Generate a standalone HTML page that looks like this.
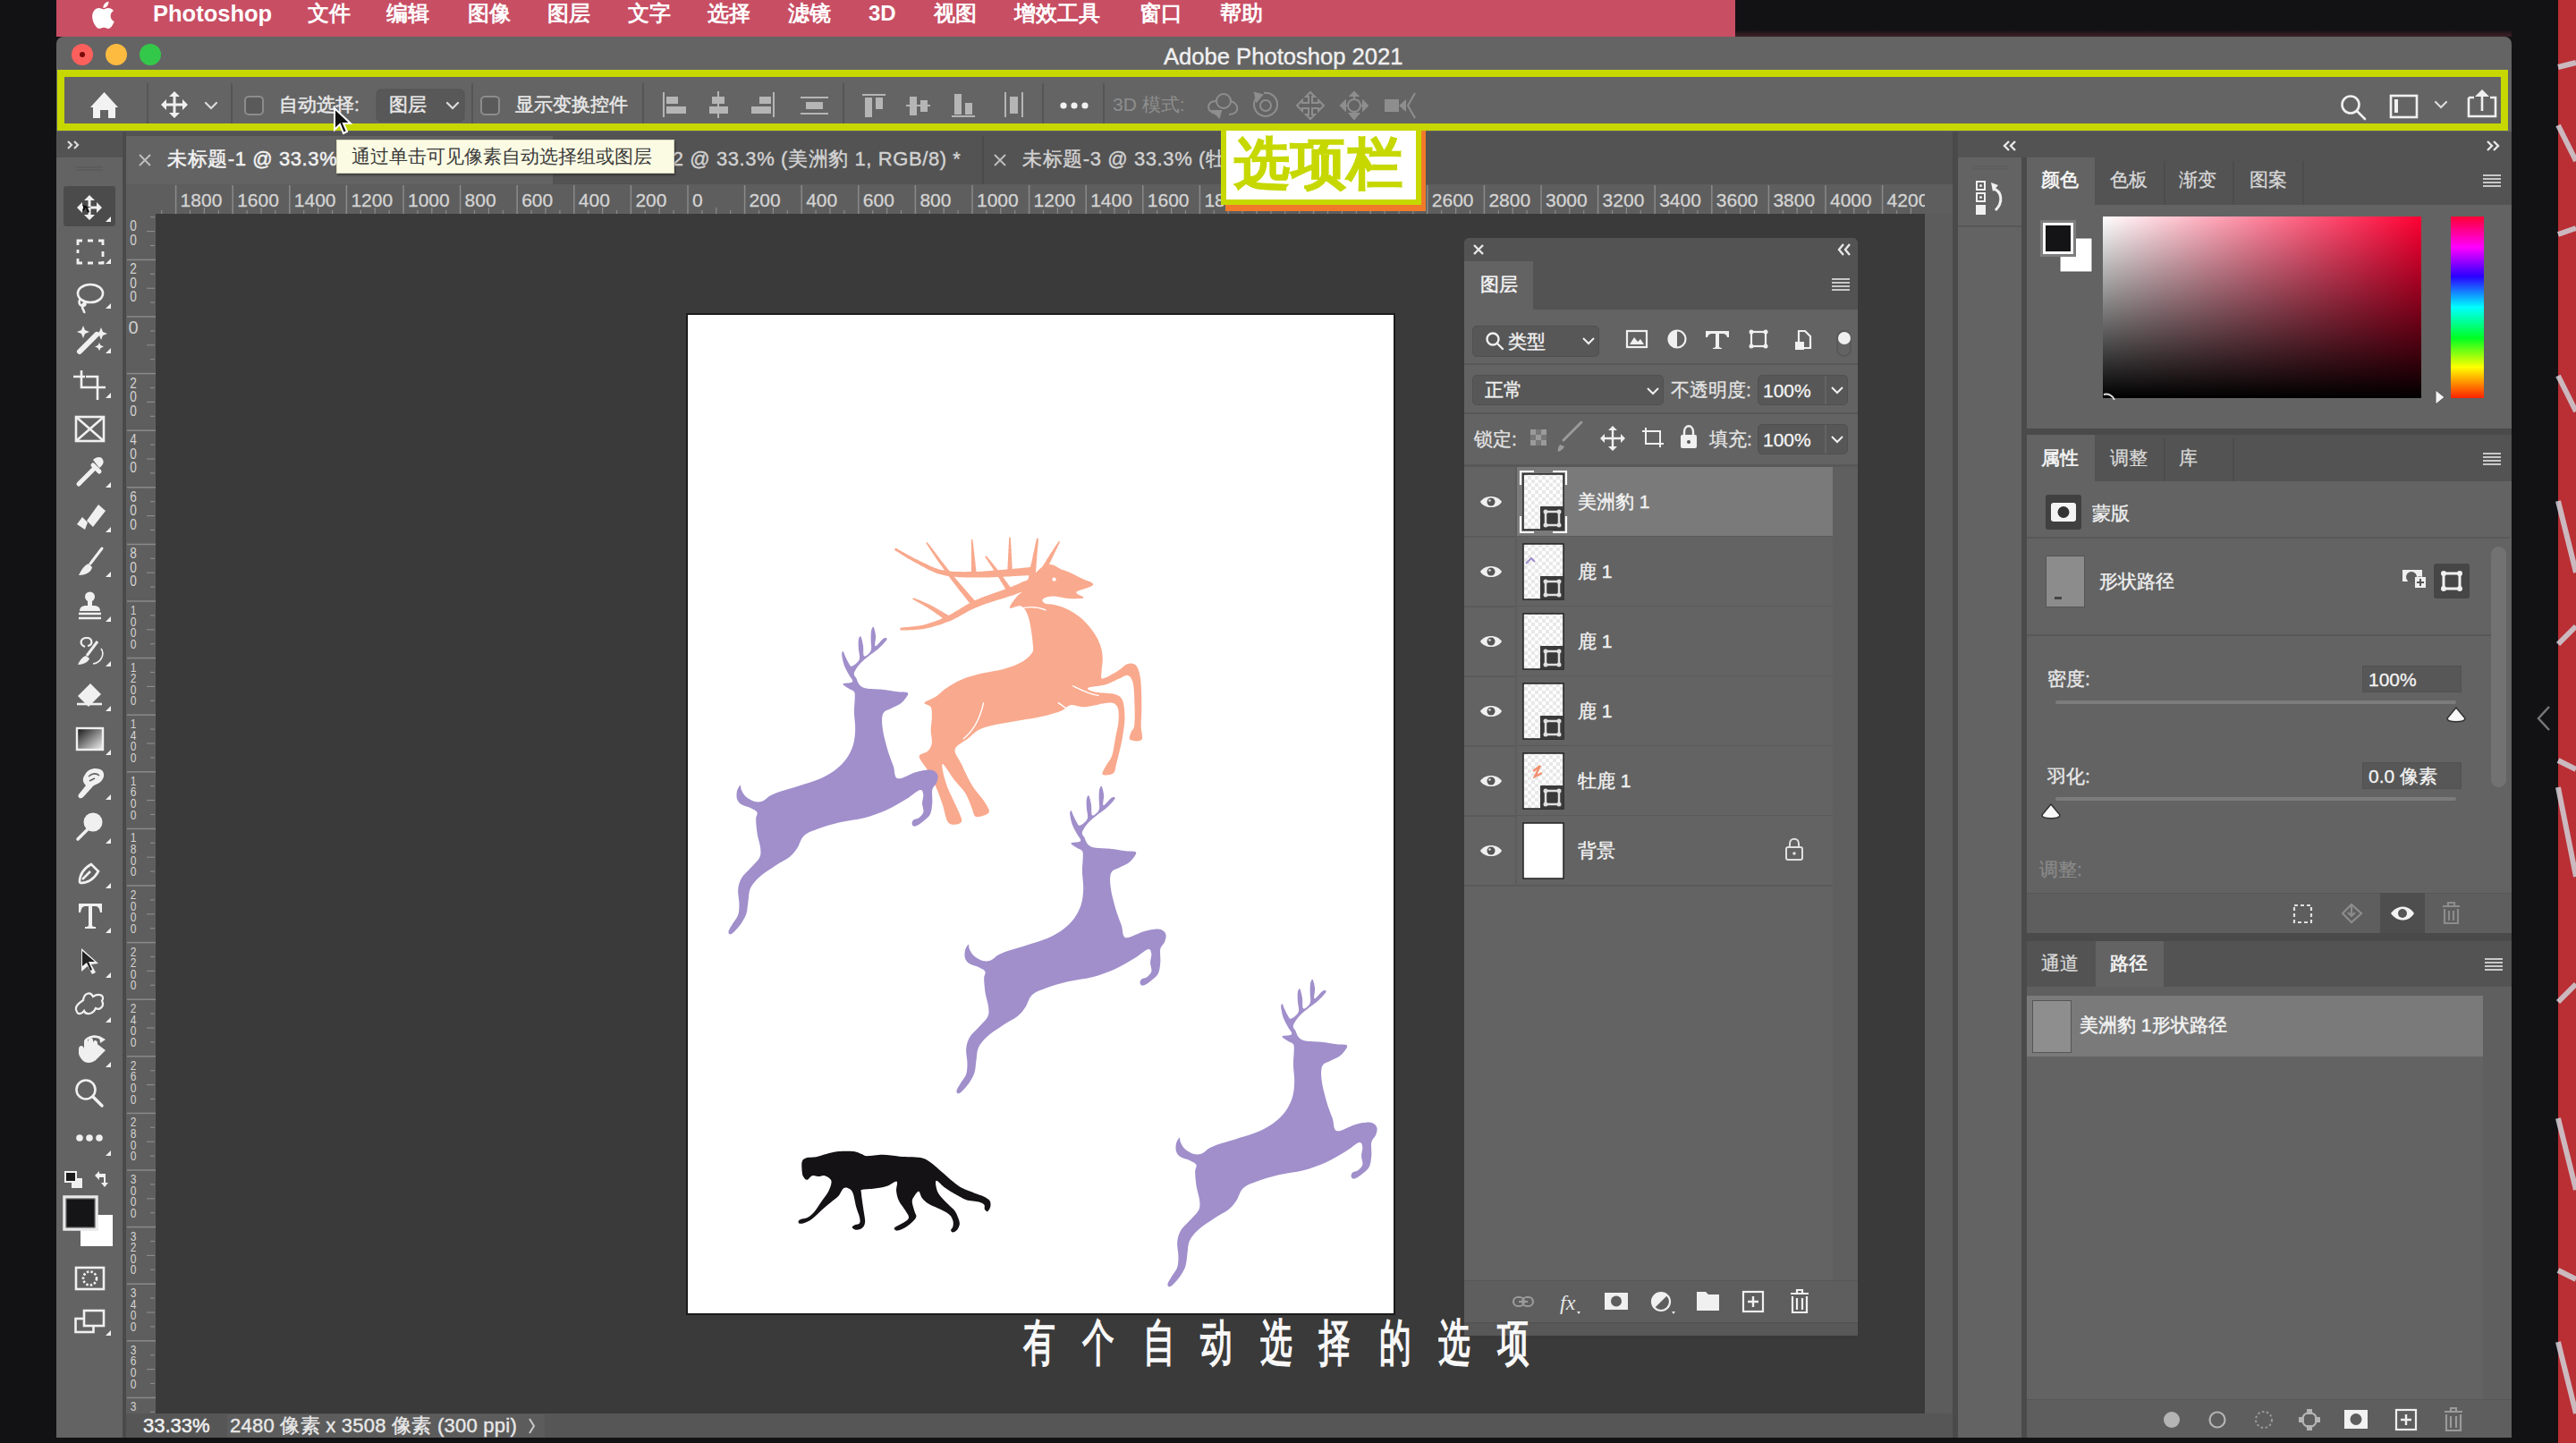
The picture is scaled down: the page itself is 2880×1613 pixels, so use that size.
<!DOCTYPE html>
<html><head><meta charset="utf-8">
<style>
*{box-sizing:border-box;margin:0;padding:0}
html,body{width:2880px;height:1613px;overflow:hidden;background:#121215;font-family:"Liberation Sans",sans-serif;color:#e6e6e6}
.a{position:absolute}
.t{position:absolute;white-space:nowrap;line-height:1}
svg{position:absolute;overflow:visible}
</style></head><body>
<!-- right red strip -->
<svg style="left:2860px;top:0" width="20" height="1613"><rect width="20" height="1613" fill="#b92f34"/><g stroke="#cfd2d8" stroke-width="6" fill="none" opacity="0.85"><path d="M0 75 L20 70"/><path d="M0 140 L20 180"/><path d="M0 262 L20 255"/><path d="M0 420 L20 460"/><path d="M0 560 L20 640"/><path d="M0 720 L20 700"/><path d="M0 850 L20 860"/><path d="M0 880 L20 980"/><path d="M0 1120 L20 1100"/><path d="M0 1250 L20 1330"/><path d="M0 1420 L20 1430"/><path d="M0 1500 L20 1580"/></g></svg>
<!-- menu bar -->
<div class="a" style="left:63px;top:0;width:1877px;height:41px;background:#c84e64"></div>
<div class="a" style="left:1940px;top:34px;width:868px;height:7px;background:linear-gradient(to bottom,#1a1216,#3d2228)"></div>
<svg style="left:96px;top:-3px" width="40" height="40" viewBox="0 0 34 34"><path fill="#fff" d="M23.5 17.8c0-3.3 2.7-4.9 2.8-5-1.5-2.2-3.9-2.5-4.7-2.6-2-.2-3.9 1.2-4.9 1.2s-2.6-1.2-4.2-1.1c-2.2 0-4.2 1.3-5.3 3.2-2.3 3.9-.6 9.8 1.6 13 1.1 1.6 2.4 3.3 4.1 3.3 1.6-.1 2.3-1.1 4.2-1.1s2.5 1.1 4.2 1c1.7 0 2.8-1.6 3.9-3.2 1.2-1.8 1.7-3.5 1.8-3.6-.1 0-3.4-1.300-3.5-5.1zM20.3 8.2c.9-1.100 1.500-2.600 1.300-4.100-1.300.1-2.900.9-3.800 2-.8.9-1.500 2.500-1.300 4 1.500.1 2.900-.8 3.800-1.900z"/></svg>
<div class="t" style="left:171px;top:3px;font-size:25.5px;font-weight:bold;color:#fff">Photoshop</div>
<div class="t" style="left:344px;top:3px;font-size:24px;color:#fff;font-weight:bold">文件</div>
<div class="t" style="left:432px;top:3px;font-size:24px;color:#fff;font-weight:bold">编辑</div>
<div class="t" style="left:523px;top:3px;font-size:24px;color:#fff;font-weight:bold">图像</div>
<div class="t" style="left:612px;top:3px;font-size:24px;color:#fff;font-weight:bold">图层</div>
<div class="t" style="left:702px;top:3px;font-size:24px;color:#fff;font-weight:bold">文字</div>
<div class="t" style="left:791px;top:3px;font-size:24px;color:#fff;font-weight:bold">选择</div>
<div class="t" style="left:881px;top:3px;font-size:24px;color:#fff;font-weight:bold">滤镜</div>
<div class="t" style="left:971px;top:3px;font-size:24px;color:#fff;font-weight:bold">3D</div>
<div class="t" style="left:1044px;top:3px;font-size:24px;color:#fff;font-weight:bold">视图</div>
<div class="t" style="left:1134px;top:3px;font-size:24px;color:#fff;font-weight:bold">增效工具</div>
<div class="t" style="left:1274px;top:3px;font-size:24px;color:#fff;font-weight:bold">窗口</div>
<div class="t" style="left:1364px;top:3px;font-size:24px;color:#fff;font-weight:bold">帮助</div>

<!-- window -->
<div class="a" style="left:63px;top:41px;width:2745px;height:1566px;background:#646464;border-radius:8px 8px 0 0"></div>
<!-- title -->
<div class="t" style="left:1301px;top:51px;font-size:25.6px;color:#f0f0f0;-webkit-text-stroke:0.4px #f0f0f0">Adobe Photoshop 2021</div>
<!-- traffic lights -->
<div class="a" style="left:80px;top:49px;width:24px;height:24px;border-radius:50%;background:#fc605c"></div>
<div class="a" style="left:89px;top:58px;width:6px;height:6px;border-radius:50%;background:#7a0a0a"></div>
<div class="a" style="left:118px;top:49px;width:24px;height:24px;border-radius:50%;background:#fdbc40"></div>
<div class="a" style="left:156px;top:49px;width:24px;height:24px;border-radius:50%;background:#34c84a"></div>
<!-- options bar yellow border -->
<div class="a" style="left:64px;top:78px;width:2740px;height:68px;border:8px solid #c6d800;background:#646464"></div>

<!-- options bar content -->
<svg style="left:0;top:0" width="2880" height="160">
<g fill="#f2f2f2">
<path d="M101 120 L116.5 103 L132 120 L129 120 L129 132 L121 132 L121 123 L112 123 L112 132 L104 132 L104 120 Z"/>
</g>
<g stroke="#555" stroke-width="2">
<line x1="165" y1="93" x2="165" y2="138"/><line x1="259" y1="93" x2="259" y2="138"/><line x1="528" y1="93" x2="528" y2="138"/><line x1="719" y1="93" x2="719" y2="138"/><line x1="943" y1="93" x2="943" y2="138"/><line x1="1166" y1="93" x2="1166" y2="138"/><line x1="1234" y1="93" x2="1234" y2="138"/>
</g>
<!-- move icon -->
<g fill="#f0f0f0" stroke="#f0f0f0">
<path d="M182 117 H208 M195 104 V130" stroke-width="3"/>
<path d="M195 102 L201 108 L189 108 Z M195 132 L201 126 L189 126 Z M180 117 L186 111 L186 123 Z M210 117 L204 111 L204 123 Z" stroke="none"/>
</g>
<rect x="421" y="100" width="98" height="36" rx="5" fill="#585858" stroke="#525252" stroke-width="1"/>
<g fill="none" stroke="#dcdcdc" stroke-width="2.2" stroke-linecap="round">
<path d="M230 115 L236 121 L242 115"/>
<path d="M500 115 L506 121 L512 115"/>
<path d="M2723 114 L2729 120 L2735 114"/>
</g>
<rect x="274" y="108" width="20" height="20" rx="4" fill="#5a5a5a" stroke="#8c8c8c" stroke-width="2"/>
<rect x="538" y="108" width="20" height="20" rx="4" fill="#5a5a5a" stroke="#8c8c8c" stroke-width="2"/>
<!-- align icons -->
<g fill="#b5b5b5">
<rect x="741" y="103" width="2" height="28"/><rect x="745" y="108" width="13" height="8"/><rect x="745" y="119" width="22" height="8"/>
<rect x="802" y="102" width="2" height="30"/><rect x="796" y="108" width="14" height="8"/><rect x="793" y="119" width="21" height="8"/>
<rect x="864" y="103" width="2" height="28"/><rect x="849" y="108" width="13" height="8"/><rect x="840" y="119" width="22" height="8"/>
<rect x="895" y="108" width="31" height="2"/><rect x="901" y="114" width="19" height="8"/><rect x="895" y="126" width="31" height="2"/>
<rect x="964" y="105" width="26" height="2"/><rect x="967" y="109" width="8" height="22"/><rect x="979" y="109" width="8" height="13"/>
<rect x="1013" y="117" width="27" height="2"/><rect x="1017" y="108" width="8" height="21"/><rect x="1029" y="112" width="8" height="13"/>
<rect x="1064" y="129" width="26" height="2"/><rect x="1067" y="105" width="8" height="23"/><rect x="1079" y="115" width="8" height="13"/>
<rect x="1123" y="103" width="2" height="28"/><rect x="1142" y="103" width="2" height="28"/><rect x="1129" y="108" width="9" height="19"/>
</g>
<g fill="#f2f2f2"><circle cx="1189" cy="118" r="3.6"/><circle cx="1201" cy="118" r="3.6"/><circle cx="1213" cy="118" r="3.6"/></g>
<!-- 3D icons -->
<g fill="none" stroke="#8e8e8e" stroke-width="2">
<circle cx="1368" cy="113" r="8"/><path d="M1360 113 C1350 113 1348 122 1356 126 L1362 128 M1376 113 C1386 116 1386 128 1374 128"/><path d="M1356 124 L1363 131 L1365 124 Z" fill="#8e8e8e"/>
<circle cx="1415" cy="118" r="6"/><path d="M1404 110 A13 13 0 1 0 1413 104"/><path d="M1403 104 L1411 106 L1405 113 Z" fill="#8e8e8e"/>
<path d="M1465 103 L1470 108 L1467 108 L1467 115 L1474 115 L1474 112 L1480 118 L1474 124 L1474 121 L1467 121 L1467 128 L1470 128 L1465 133 L1460 128 L1463 128 L1463 121 L1456 121 L1456 124 L1450 118 L1456 112 L1456 115 L1463 115 L1463 108 L1460 108 Z"/>
<circle cx="1514" cy="118" r="7"/><path d="M1514 103 V110 M1514 126 V133 M1499 118 H1506 M1522 118 H1529"/>
<path d="M1514 103 L1510 107 H1518 Z M1514 133 L1509 127 H1519 Z M1499 118 L1504 113 V123 Z M1529 118 L1524 113 V123 Z" fill="#8e8e8e"/>
<path d="M1582 104 L1574 118 L1582 132"/>
</g>
<g fill="#8e8e8e"><rect x="1548" y="111" width="16" height="14"/><path d="M1564 118 L1572 111 V125 Z"/></g>
<!-- right icons -->
<g fill="none" stroke="#f0f0f0" stroke-width="2.6">
<circle cx="2628" cy="117" r="9.5"/><path d="M2635 124 L2644 133" stroke-linecap="round"/>
<rect x="2673" y="107" width="29" height="24"/>
<path d="M2760 109 V130 H2790 V109 H2784 M2766 109 H2760" />
<path d="M2775 124 V104"/>
</g>
<g fill="#f0f0f0"><path d="M2775 100 L2783 108 H2767 Z"/><rect x="2677" y="111" width="4" height="15"/></g>
</svg>
<div class="t" style="left:312px;top:106px;font-size:21px;color:#e8e8e8;-webkit-text-stroke:0.5px #e8e8e8">自动选择:</div>
<div class="t" style="left:435px;top:106px;font-size:21px;color:#e8e8e8;-webkit-text-stroke:0.5px #e8e8e8">图层</div>
<div class="t" style="left:576px;top:106px;font-size:21px;color:#e8e8e8;-webkit-text-stroke:0.5px #e8e8e8">显示变换控件</div>
<div class="t" style="left:1244px;top:106px;font-size:21px;color:#8e8e8e">3D 模式:</div>

<!-- toolbar column -->
<div class="a" style="left:63px;top:147px;width:74px;height:1460px;background:#636363"></div>
<div class="a" style="left:63px;top:147px;width:74px;height:29px;background:#535353"></div>
<div class="a" style="left:137px;top:147px;width:4px;height:1460px;background:#4a4a4a"></div>

<!-- toolbar -->
<svg style="left:0;top:0" width="200" height="1613">

<g fill="none" stroke="#dcdcdc" stroke-width="2.2"><path d="M76 158 L80 162 L76 166 M83 158 L87 162 L83 166"/></g>
<g stroke="#575757" stroke-width="1"><path d="M85 187 H115 M85 190 H115"/></g>
<rect x="71" y="208" width="58" height="45" rx="3" fill="#4b4b4b"/>
<g fill="#f0f0f0">
<!-- triangles -->
<path d="M124 242 L124 248 L118 248 Z"/><path d="M124 289 L124 295 L118 295 Z"/><path d="M124 339 L124 345 L118 345 Z"/>
<path d="M124 389 L124 395 L118 395 Z"/><path d="M124 439 L124 445 L118 445 Z"/><path d="M124 539 L124 545 L118 545 Z"/>
<path d="M124 589 L124 595 L118 595 Z"/><path d="M124 639 L124 645 L118 645 Z"/><path d="M124 689 L124 695 L118 695 Z"/>
<path d="M124 739 L124 745 L118 745 Z"/><path d="M124 789 L124 795 L118 795 Z"/><path d="M124 838 L124 844 L118 844 Z"/>
<path d="M124 888 L124 894 L118 894 Z"/><path d="M124 937 L124 943 L118 943 Z"/><path d="M124 987 L124 993 L118 993 Z"/>
<path d="M124 1037 L124 1043 L118 1043 Z"/><path d="M124 1087 L124 1093 L118 1093 Z"/><path d="M124 1137 L124 1143 L118 1143 Z"/>
<path d="M124 1187 L124 1193 L118 1193 Z"/><path d="M124 1286 L124 1292 L118 1292 Z"/><path d="M124 1487 L124 1493 L118 1493 Z"/>
</g>
<!-- move -->
<g fill="#f0f0f0" stroke="#f0f0f0">
<path d="M89 232 H111 M100 221 V243" stroke-width="3"/>
<path d="M100 218 L106 224 L94 224 Z M100 246 L106 240 L94 240 Z M86 232 L92 226 L92 238 Z M114 232 L108 226 L108 238 Z" stroke="none"/>
</g>
<path d="M93 229 L93 236 L96 233 L98 238 L100 237 L98 232 L102 232 Z" fill="#111"/>
<g fill="none" stroke="#f0f0f0" stroke-width="2.6">
<!-- marquee -->
<path d="M87 274 V269 H92 M98 269 H104 M110 269 H115 V274 M115 281 V287 M115 292 V294 H110 M104 294 H98 M92 294 H87 V289 M87 283 V279" stroke-width="2.8"/>
<!-- lasso -->
<ellipse cx="101" cy="328" rx="14" ry="10"/><path d="M90 334 C86 340 92 344 95 341 C97 338 92 338 92 343 C92 346 95 348 94 350"/>
<!-- wand -->
<path d="M89 393 L108 374" stroke-width="6" stroke-linecap="round"/>
<!-- crop -->
<path d="M82 421 H95 M91 414 V433 H112 M96 421 H109 V440 M106 433 H118 M109 433 V447"/>
<!-- frame -->
<rect x="85" y="466" width="31" height="27"/><path d="M85 466 L116 493 M116 466 L85 493"/>
<!-- eyedropper -->
<path d="M88 541 L104 525 M104 520 L111 527" stroke-width="5" stroke-linecap="round"/>
<!-- brush -->
<path d="M114 613 L101 630" stroke-width="3" stroke-linecap="round"/>
<!-- stamp -->
<path d="M88 686 H113 M88 691 H113"/>
<!-- history brush -->
<path d="M95 723 C88 720 90 713 97 713 C104 713 104 722 98 722" stroke-width="2.2"/><path d="M113 725 C118 732 112 741 104 742" stroke-width="1.6"/>
<!-- eraser -->
<path d="M86 787 H114"/>
<!-- dodge -->
<path d="M87 938 L98 927" stroke-width="3.5" stroke-linecap="round"/>
<!-- pen -->
<path d="M89 986 C89 976 95 970 102 966 L110 974 C106 981 100 987 90 987 Z M92 983 L101 974"/>
<!-- path select -->
<!-- shape -->
<path d="M86 1131 C82 1125 90 1120 93 1118 C94 1110 101 1108 104 1114 C110 1110 118 1112 114 1119 C117 1124 112 1130 107 1127 C104 1134 96 1135 94 1130 C91 1134 87 1134 86 1131 Z" stroke-width="2.2"/>
<!-- hand rotate -->
<path d="M95 1164 C99 1158 108 1157 113 1161"/>
<!-- zoom -->
<circle cx="96" cy="1218" r="10.5"/><path d="M104 1226 L114 1236" stroke-width="3.5" stroke-linecap="round"/>
<!-- quick mask -->
<rect x="85" y="1417" width="31" height="24"/><circle cx="100.5" cy="1429" r="7.5" stroke-dasharray="2.5 2"/>
<!-- screen mode -->
<rect x="84.5" y="1474" width="20" height="15"/><rect x="94" y="1465" width="22" height="17" fill="#636363"/>
</g>
<g fill="#f0f0f0">
<!-- wand stars -->
<path d="M93 364 L95 369 L100 371 L95 373 L93 378 L91 373 L86 371 L91 369 Z M113 366 L115 371 L120 373 L115 375 L113 380 L111 375 L106 373 L111 371 Z M111 383 L112.5 386 L116 387.5 L112.5 389 L111 392 L109.5 389 L106 387.5 L109.5 386 Z"/>
<!-- eyedropper top -->
<path d="M104 514 C108 510 114 510 115 514 C117 517 114 521 111 523 Z"/>
<!-- healing -->
<path d="M97 582 L110 564 L118 571 L104 589 Z"/><path d="M92 578 L98 584 L95 592 L86 586 Z"/>
<!-- brush tip -->
<path d="M99 630 C94 632 91 637 88 643 C95 643 102 640 103 634 Z"/>
<!-- stamp -->
<circle cx="100.5" cy="667" r="5.5"/><rect x="98" y="670" width="5" height="8"/><path d="M89 683 C89 679 92 677 96 677 H105 C109 677 112 679 112 683 Z"/>
<!-- history brush tip -->
<path d="M109 717 L97 733" stroke="#f0f0f0" stroke-width="3"/><path d="M96 733 C91 735 89 739 87 743 C93 743 99 740 100 736 Z"/>
<!-- eraser -->
<path d="M87 778 L101 764 L113 776 L99 790 Z" opacity="1"/>
<!-- smudge -->
<path d="M95 866 C98 859 108 857 114 861 C118 865 116 872 111 875 C108 877 105 877 103 880 L93 891 C90 894 86 891 88 888 L96 878 C92 874 92 870 95 866 Z"/><path d="M99 868 C103 864 108 864 111 867 M100 873 L106 870" stroke="#636363" stroke-width="1.6" fill="none"/>
<!-- dodge -->
<circle cx="104" cy="919" r="10.5"/>
<!-- T -->
<path d="M88 1010 H114 V1020 H112 C111 1015 110 1013 106 1013 H103 V1034 C103 1036 105 1036 107 1036 V1038 H95 V1036 C97 1036 99 1036 99 1034 V1013 H96 C92 1013 91 1015 90 1020 H88 Z"/>
<!-- path select arrow -->
<path d="M91 1060 L110 1077 L102 1078 L107 1087 L103 1089 L98 1080 L91 1086 Z"/>
<!-- hand -->
<path d="M88 1173 C88 1168 93 1168 94 1172 V1165 C94 1161 99 1161 99 1165 V1163 C99 1159 104 1159 104 1163 V1166 C104 1162 109 1162 109 1166 V1178 C109 1184 105 1188 99 1188 C94 1188 90 1184 88 1178 Z"/>
<path d="M106 1165 L118 1174 L106 1186 Z"/><path d="M111 1158 L118 1162 L112 1166 Z"/>
<!-- dots -->
<circle cx="89" cy="1272" r="3.8"/><circle cx="100" cy="1272" r="3.8"/><circle cx="111" cy="1272" r="3.8"/>
<!-- swap -->
<path d="M106 1314 L111 1309 V1312 H118 V1322 H121 L117 1327 L113 1322 H116 V1316 H111 V1319 Z"/>
</g>
<path d="M86 1109 L86 1109" />
<path d="M92 1063 L92 1080 L97 1076 L101 1085 L103 1084 L99 1075 L106 1075 Z" fill="#222"/>
<!-- gradient -->
<defs><linearGradient id="tg" x1="0" y1="0" x2="1" y2="1"><stop offset="0" stop-color="#111"/><stop offset="1" stop-color="#f4f4f4"/></linearGradient></defs>
<rect x="86" y="814" width="29" height="24" fill="url(#tg)" stroke="#f0f0f0" stroke-width="2.4"/>
<!-- small fg/bg -->
<rect x="80" y="1317" width="12" height="11" fill="#f0f0f0"/><rect x="73" y="1310" width="12" height="11" fill="#1a1a1a" stroke="#f0f0f0" stroke-width="2"/>
<!-- fg/bg -->
<rect x="90" y="1358" width="36" height="35" fill="#fff"/>
<rect x="72" y="1338" width="36" height="36" fill="#151517" stroke="#e8e8e8" stroke-width="3.5"/>
<rect x="74" y="1340" width="32" height="32" fill="none" stroke="#777" stroke-width="1"/>
</svg>

<!-- document area -->
<div class="a" style="left:141px;top:147px;width:2042px;height:59px;background:#535353"></div>
<div class="a" style="left:141px;top:152px;width:477px;height:54px;background:#636363"></div>
<!-- rulers -->
<div class="a" style="left:141px;top:206px;width:2042px;height:33px;background:#5e5e5e"></div>
<div class="a" style="left:141px;top:206px;width:33px;height:1374px;background:#5e5e5e"></div>
<!-- canvas -->
<div class="a" style="left:174px;top:239px;width:1978px;height:1341px;background:#3a3a3a"></div>
<div class="a" style="left:2152px;top:239px;width:31px;height:1341px;background:#5c5c5c"></div>
<!-- status bar -->
<div class="a" style="left:141px;top:1580px;width:2042px;height:27px;background:#565656"></div>
<div class="a" style="left:2183px;top:147px;width:6px;height:1460px;background:#4a4a4a"></div>

<!-- tabs -->
<div class="a" style="left:1098px;top:152px;width:2px;height:54px;background:#4a4a4a"></div>
<svg style="left:0;top:0" width="1200" height="220"><g stroke="#bdbdbd" stroke-width="2"><path d="M156 173 L168 185 M168 173 L156 185"/><path d="M1112 173 L1124 185 M1124 173 L1112 185"/></g></svg>
<div class="t" style="left:187px;top:167px;font-size:22px;color:#f2f2f2;-webkit-text-stroke:0.5px #f2f2f2;letter-spacing:0.6px">未标题-1 @ 33.3% (美洲豹 1, RGB/8) *</div>
<div class="t" style="left:676px;top:167px;font-size:22px;color:#d2d2d2;-webkit-text-stroke:0.4px #d2d2d2;letter-spacing:0.6px">未标题-2 @ 33.3% (美洲豹 1, RGB/8) *</div>
<div class="t" style="left:1143px;top:167px;font-size:22px;color:#d2d2d2;-webkit-text-stroke:0.4px #d2d2d2;letter-spacing:0.6px;width:225px;overflow:hidden">未标题-3 @ 33.3% (牡鹿 1, RGB/8) *</div>
<svg style="left:0;top:0" width="2880" height="1613">
<g stroke="#8a8a8a" stroke-width="1.5">
<line x1="196.6" y1="207" x2="196.6" y2="239"/>







<line x1="260.2" y1="207" x2="260.2" y2="239"/>







<line x1="323.8" y1="207" x2="323.8" y2="239"/>







<line x1="387.4" y1="207" x2="387.4" y2="239"/>







<line x1="451.0" y1="207" x2="451.0" y2="239"/>







<line x1="514.6" y1="207" x2="514.6" y2="239"/>







<line x1="578.2" y1="207" x2="578.2" y2="239"/>







<line x1="641.8" y1="207" x2="641.8" y2="239"/>







<line x1="705.4" y1="207" x2="705.4" y2="239"/>







<line x1="769.0" y1="207" x2="769.0" y2="239"/>







<line x1="832.6" y1="207" x2="832.6" y2="239"/>







<line x1="896.2" y1="207" x2="896.2" y2="239"/>







<line x1="959.8" y1="207" x2="959.8" y2="239"/>







<line x1="1023.4" y1="207" x2="1023.4" y2="239"/>







<line x1="1087.0" y1="207" x2="1087.0" y2="239"/>







<line x1="1150.6" y1="207" x2="1150.6" y2="239"/>







<line x1="1214.2" y1="207" x2="1214.2" y2="239"/>







<line x1="1277.8" y1="207" x2="1277.8" y2="239"/>







<line x1="1341.4" y1="207" x2="1341.4" y2="239"/>







<line x1="1405.0" y1="207" x2="1405.0" y2="239"/>







<line x1="1468.6" y1="207" x2="1468.6" y2="239"/>







<line x1="1532.2" y1="207" x2="1532.2" y2="239"/>







<line x1="1595.8" y1="207" x2="1595.8" y2="239"/>







<line x1="1659.4" y1="207" x2="1659.4" y2="239"/>







<line x1="1723.0" y1="207" x2="1723.0" y2="239"/>







<line x1="1786.6" y1="207" x2="1786.6" y2="239"/>







<line x1="1850.2" y1="207" x2="1850.2" y2="239"/>







<line x1="1913.8" y1="207" x2="1913.8" y2="239"/>







<line x1="1977.4" y1="207" x2="1977.4" y2="239"/>







<line x1="2041.0" y1="207" x2="2041.0" y2="239"/>







<line x1="2104.6" y1="207" x2="2104.6" y2="239"/>





</g>
<g stroke="#8a8a8a" stroke-width="1.5">






<line x1="142" y1="290.4" x2="174" y2="290.4"/>







<line x1="142" y1="354.0" x2="174" y2="354.0"/>







<line x1="142" y1="417.6" x2="174" y2="417.6"/>







<line x1="142" y1="481.2" x2="174" y2="481.2"/>







<line x1="142" y1="544.8" x2="174" y2="544.8"/>







<line x1="142" y1="608.4" x2="174" y2="608.4"/>







<line x1="142" y1="672.0" x2="174" y2="672.0"/>







<line x1="142" y1="735.6" x2="174" y2="735.6"/>







<line x1="142" y1="799.2" x2="174" y2="799.2"/>







<line x1="142" y1="862.8" x2="174" y2="862.8"/>







<line x1="142" y1="926.4" x2="174" y2="926.4"/>







<line x1="142" y1="990.0" x2="174" y2="990.0"/>







<line x1="142" y1="1053.6" x2="174" y2="1053.6"/>







<line x1="142" y1="1117.2" x2="174" y2="1117.2"/>







<line x1="142" y1="1180.8" x2="174" y2="1180.8"/>







<line x1="142" y1="1244.4" x2="174" y2="1244.4"/>







<line x1="142" y1="1308.0" x2="174" y2="1308.0"/>







<line x1="142" y1="1371.6" x2="174" y2="1371.6"/>







<line x1="142" y1="1435.2" x2="174" y2="1435.2"/>







<line x1="142" y1="1498.8" x2="174" y2="1498.8"/>







<line x1="142" y1="1562.4" x2="174" y2="1562.4"/>


</g></svg>
<div class="t" style="left:201.6px;top:213px;font-size:21px;color:#d4d4d4;-webkit-text-stroke:0.3px #d4d4d4">1800</div>
<div class="t" style="left:265.2px;top:213px;font-size:21px;color:#d4d4d4;-webkit-text-stroke:0.3px #d4d4d4">1600</div>
<div class="t" style="left:328.8px;top:213px;font-size:21px;color:#d4d4d4;-webkit-text-stroke:0.3px #d4d4d4">1400</div>
<div class="t" style="left:392.4px;top:213px;font-size:21px;color:#d4d4d4;-webkit-text-stroke:0.3px #d4d4d4">1200</div>
<div class="t" style="left:456.0px;top:213px;font-size:21px;color:#d4d4d4;-webkit-text-stroke:0.3px #d4d4d4">1000</div>
<div class="t" style="left:519.6px;top:213px;font-size:21px;color:#d4d4d4;-webkit-text-stroke:0.3px #d4d4d4">800</div>
<div class="t" style="left:583.2px;top:213px;font-size:21px;color:#d4d4d4;-webkit-text-stroke:0.3px #d4d4d4">600</div>
<div class="t" style="left:646.8px;top:213px;font-size:21px;color:#d4d4d4;-webkit-text-stroke:0.3px #d4d4d4">400</div>
<div class="t" style="left:710.4px;top:213px;font-size:21px;color:#d4d4d4;-webkit-text-stroke:0.3px #d4d4d4">200</div>
<div class="t" style="left:774.0px;top:213px;font-size:21px;color:#d4d4d4;-webkit-text-stroke:0.3px #d4d4d4">0</div>
<div class="t" style="left:837.6px;top:213px;font-size:21px;color:#d4d4d4;-webkit-text-stroke:0.3px #d4d4d4">200</div>
<div class="t" style="left:901.2px;top:213px;font-size:21px;color:#d4d4d4;-webkit-text-stroke:0.3px #d4d4d4">400</div>
<div class="t" style="left:964.8px;top:213px;font-size:21px;color:#d4d4d4;-webkit-text-stroke:0.3px #d4d4d4">600</div>
<div class="t" style="left:1028.4px;top:213px;font-size:21px;color:#d4d4d4;-webkit-text-stroke:0.3px #d4d4d4">800</div>
<div class="t" style="left:1092.0px;top:213px;font-size:21px;color:#d4d4d4;-webkit-text-stroke:0.3px #d4d4d4">1000</div>
<div class="t" style="left:1155.6px;top:213px;font-size:21px;color:#d4d4d4;-webkit-text-stroke:0.3px #d4d4d4">1200</div>
<div class="t" style="left:1219.2px;top:213px;font-size:21px;color:#d4d4d4;-webkit-text-stroke:0.3px #d4d4d4">1400</div>
<div class="t" style="left:1282.8px;top:213px;font-size:21px;color:#d4d4d4;-webkit-text-stroke:0.3px #d4d4d4">1600</div>
<div class="t" style="left:1346.4px;top:213px;font-size:21px;color:#d4d4d4;-webkit-text-stroke:0.3px #d4d4d4">1800</div>
<div class="t" style="left:1410.0px;top:213px;font-size:21px;color:#d4d4d4;-webkit-text-stroke:0.3px #d4d4d4">2000</div>
<div class="t" style="left:1473.6px;top:213px;font-size:21px;color:#d4d4d4;-webkit-text-stroke:0.3px #d4d4d4">2200</div>
<div class="t" style="left:1537.2px;top:213px;font-size:21px;color:#d4d4d4;-webkit-text-stroke:0.3px #d4d4d4">2400</div>
<div class="t" style="left:1600.8px;top:213px;font-size:21px;color:#d4d4d4;-webkit-text-stroke:0.3px #d4d4d4">2600</div>
<div class="t" style="left:1664.4px;top:213px;font-size:21px;color:#d4d4d4;-webkit-text-stroke:0.3px #d4d4d4">2800</div>
<div class="t" style="left:1728.0px;top:213px;font-size:21px;color:#d4d4d4;-webkit-text-stroke:0.3px #d4d4d4">3000</div>
<div class="t" style="left:1791.6px;top:213px;font-size:21px;color:#d4d4d4;-webkit-text-stroke:0.3px #d4d4d4">3200</div>
<div class="t" style="left:1855.2px;top:213px;font-size:21px;color:#d4d4d4;-webkit-text-stroke:0.3px #d4d4d4">3400</div>
<div class="t" style="left:1918.8px;top:213px;font-size:21px;color:#d4d4d4;-webkit-text-stroke:0.3px #d4d4d4">3600</div>
<div class="t" style="left:1982.4px;top:213px;font-size:21px;color:#d4d4d4;-webkit-text-stroke:0.3px #d4d4d4">3800</div>
<div class="t" style="left:2046.0px;top:213px;font-size:21px;color:#d4d4d4;-webkit-text-stroke:0.3px #d4d4d4">4000</div>
<div class="t" style="left:2109.6px;top:213px;font-size:21px;color:#d4d4d4;-webkit-text-stroke:0.3px #d4d4d4">4200</div>
<svg style="left:0;top:0" width="2880" height="1613"><line x1="180.7" y1="235" x2="180.7" y2="239" stroke="#8a8a8a" stroke-width="1.2"/><line x1="212.5" y1="235" x2="212.5" y2="239" stroke="#8a8a8a" stroke-width="1.2"/><line x1="228.4" y1="232" x2="228.4" y2="239" stroke="#8a8a8a" stroke-width="1.2"/><line x1="244.3" y1="235" x2="244.3" y2="239" stroke="#8a8a8a" stroke-width="1.2"/><line x1="276.1" y1="235" x2="276.1" y2="239" stroke="#8a8a8a" stroke-width="1.2"/><line x1="292.0" y1="232" x2="292.0" y2="239" stroke="#8a8a8a" stroke-width="1.2"/><line x1="307.9" y1="235" x2="307.9" y2="239" stroke="#8a8a8a" stroke-width="1.2"/><line x1="339.7" y1="235" x2="339.7" y2="239" stroke="#8a8a8a" stroke-width="1.2"/><line x1="355.6" y1="232" x2="355.6" y2="239" stroke="#8a8a8a" stroke-width="1.2"/><line x1="371.5" y1="235" x2="371.5" y2="239" stroke="#8a8a8a" stroke-width="1.2"/><line x1="403.3" y1="235" x2="403.3" y2="239" stroke="#8a8a8a" stroke-width="1.2"/><line x1="419.2" y1="232" x2="419.2" y2="239" stroke="#8a8a8a" stroke-width="1.2"/><line x1="435.1" y1="235" x2="435.1" y2="239" stroke="#8a8a8a" stroke-width="1.2"/><line x1="466.9" y1="235" x2="466.9" y2="239" stroke="#8a8a8a" stroke-width="1.2"/><line x1="482.8" y1="232" x2="482.8" y2="239" stroke="#8a8a8a" stroke-width="1.2"/><line x1="498.7" y1="235" x2="498.7" y2="239" stroke="#8a8a8a" stroke-width="1.2"/><line x1="530.5" y1="235" x2="530.5" y2="239" stroke="#8a8a8a" stroke-width="1.2"/><line x1="546.4" y1="232" x2="546.4" y2="239" stroke="#8a8a8a" stroke-width="1.2"/><line x1="562.3" y1="235" x2="562.3" y2="239" stroke="#8a8a8a" stroke-width="1.2"/><line x1="594.1" y1="235" x2="594.1" y2="239" stroke="#8a8a8a" stroke-width="1.2"/><line x1="610.0" y1="232" x2="610.0" y2="239" stroke="#8a8a8a" stroke-width="1.2"/><line x1="625.9" y1="235" x2="625.9" y2="239" stroke="#8a8a8a" stroke-width="1.2"/><line x1="657.7" y1="235" x2="657.7" y2="239" stroke="#8a8a8a" stroke-width="1.2"/><line x1="673.6" y1="232" x2="673.6" y2="239" stroke="#8a8a8a" stroke-width="1.2"/><line x1="689.5" y1="235" x2="689.5" y2="239" stroke="#8a8a8a" stroke-width="1.2"/><line x1="721.3" y1="235" x2="721.3" y2="239" stroke="#8a8a8a" stroke-width="1.2"/><line x1="737.2" y1="232" x2="737.2" y2="239" stroke="#8a8a8a" stroke-width="1.2"/><line x1="753.1" y1="235" x2="753.1" y2="239" stroke="#8a8a8a" stroke-width="1.2"/><line x1="784.9" y1="235" x2="784.9" y2="239" stroke="#8a8a8a" stroke-width="1.2"/><line x1="800.8" y1="232" x2="800.8" y2="239" stroke="#8a8a8a" stroke-width="1.2"/><line x1="816.7" y1="235" x2="816.7" y2="239" stroke="#8a8a8a" stroke-width="1.2"/><line x1="848.5" y1="235" x2="848.5" y2="239" stroke="#8a8a8a" stroke-width="1.2"/><line x1="864.4" y1="232" x2="864.4" y2="239" stroke="#8a8a8a" stroke-width="1.2"/><line x1="880.3" y1="235" x2="880.3" y2="239" stroke="#8a8a8a" stroke-width="1.2"/><line x1="912.1" y1="235" x2="912.1" y2="239" stroke="#8a8a8a" stroke-width="1.2"/><line x1="928.0" y1="232" x2="928.0" y2="239" stroke="#8a8a8a" stroke-width="1.2"/><line x1="943.9" y1="235" x2="943.9" y2="239" stroke="#8a8a8a" stroke-width="1.2"/><line x1="975.7" y1="235" x2="975.7" y2="239" stroke="#8a8a8a" stroke-width="1.2"/><line x1="991.6" y1="232" x2="991.6" y2="239" stroke="#8a8a8a" stroke-width="1.2"/><line x1="1007.5" y1="235" x2="1007.5" y2="239" stroke="#8a8a8a" stroke-width="1.2"/><line x1="1039.3" y1="235" x2="1039.3" y2="239" stroke="#8a8a8a" stroke-width="1.2"/><line x1="1055.2" y1="232" x2="1055.2" y2="239" stroke="#8a8a8a" stroke-width="1.2"/><line x1="1071.1" y1="235" x2="1071.1" y2="239" stroke="#8a8a8a" stroke-width="1.2"/><line x1="1102.9" y1="235" x2="1102.9" y2="239" stroke="#8a8a8a" stroke-width="1.2"/><line x1="1118.8" y1="232" x2="1118.8" y2="239" stroke="#8a8a8a" stroke-width="1.2"/><line x1="1134.7" y1="235" x2="1134.7" y2="239" stroke="#8a8a8a" stroke-width="1.2"/><line x1="1166.5" y1="235" x2="1166.5" y2="239" stroke="#8a8a8a" stroke-width="1.2"/><line x1="1182.4" y1="232" x2="1182.4" y2="239" stroke="#8a8a8a" stroke-width="1.2"/><line x1="1198.3" y1="235" x2="1198.3" y2="239" stroke="#8a8a8a" stroke-width="1.2"/><line x1="1230.1" y1="235" x2="1230.1" y2="239" stroke="#8a8a8a" stroke-width="1.2"/><line x1="1246.0" y1="232" x2="1246.0" y2="239" stroke="#8a8a8a" stroke-width="1.2"/><line x1="1261.9" y1="235" x2="1261.9" y2="239" stroke="#8a8a8a" stroke-width="1.2"/><line x1="1293.7" y1="235" x2="1293.7" y2="239" stroke="#8a8a8a" stroke-width="1.2"/><line x1="1309.6" y1="232" x2="1309.6" y2="239" stroke="#8a8a8a" stroke-width="1.2"/><line x1="1325.5" y1="235" x2="1325.5" y2="239" stroke="#8a8a8a" stroke-width="1.2"/><line x1="1357.3" y1="235" x2="1357.3" y2="239" stroke="#8a8a8a" stroke-width="1.2"/><line x1="1373.2" y1="232" x2="1373.2" y2="239" stroke="#8a8a8a" stroke-width="1.2"/><line x1="1389.1" y1="235" x2="1389.1" y2="239" stroke="#8a8a8a" stroke-width="1.2"/><line x1="1420.9" y1="235" x2="1420.9" y2="239" stroke="#8a8a8a" stroke-width="1.2"/><line x1="1436.8" y1="232" x2="1436.8" y2="239" stroke="#8a8a8a" stroke-width="1.2"/><line x1="1452.7" y1="235" x2="1452.7" y2="239" stroke="#8a8a8a" stroke-width="1.2"/><line x1="1484.5" y1="235" x2="1484.5" y2="239" stroke="#8a8a8a" stroke-width="1.2"/><line x1="1500.4" y1="232" x2="1500.4" y2="239" stroke="#8a8a8a" stroke-width="1.2"/><line x1="1516.3" y1="235" x2="1516.3" y2="239" stroke="#8a8a8a" stroke-width="1.2"/><line x1="1548.1" y1="235" x2="1548.1" y2="239" stroke="#8a8a8a" stroke-width="1.2"/><line x1="1564.0" y1="232" x2="1564.0" y2="239" stroke="#8a8a8a" stroke-width="1.2"/><line x1="1579.9" y1="235" x2="1579.9" y2="239" stroke="#8a8a8a" stroke-width="1.2"/><line x1="1611.7" y1="235" x2="1611.7" y2="239" stroke="#8a8a8a" stroke-width="1.2"/><line x1="1627.6" y1="232" x2="1627.6" y2="239" stroke="#8a8a8a" stroke-width="1.2"/><line x1="1643.5" y1="235" x2="1643.5" y2="239" stroke="#8a8a8a" stroke-width="1.2"/><line x1="1675.3" y1="235" x2="1675.3" y2="239" stroke="#8a8a8a" stroke-width="1.2"/><line x1="1691.2" y1="232" x2="1691.2" y2="239" stroke="#8a8a8a" stroke-width="1.2"/><line x1="1707.1" y1="235" x2="1707.1" y2="239" stroke="#8a8a8a" stroke-width="1.2"/><line x1="1738.9" y1="235" x2="1738.9" y2="239" stroke="#8a8a8a" stroke-width="1.2"/><line x1="1754.8" y1="232" x2="1754.8" y2="239" stroke="#8a8a8a" stroke-width="1.2"/><line x1="1770.7" y1="235" x2="1770.7" y2="239" stroke="#8a8a8a" stroke-width="1.2"/><line x1="1802.5" y1="235" x2="1802.5" y2="239" stroke="#8a8a8a" stroke-width="1.2"/><line x1="1818.4" y1="232" x2="1818.4" y2="239" stroke="#8a8a8a" stroke-width="1.2"/><line x1="1834.3" y1="235" x2="1834.3" y2="239" stroke="#8a8a8a" stroke-width="1.2"/><line x1="1866.1" y1="235" x2="1866.1" y2="239" stroke="#8a8a8a" stroke-width="1.2"/><line x1="1882.0" y1="232" x2="1882.0" y2="239" stroke="#8a8a8a" stroke-width="1.2"/><line x1="1897.9" y1="235" x2="1897.9" y2="239" stroke="#8a8a8a" stroke-width="1.2"/><line x1="1929.7" y1="235" x2="1929.7" y2="239" stroke="#8a8a8a" stroke-width="1.2"/><line x1="1945.6" y1="232" x2="1945.6" y2="239" stroke="#8a8a8a" stroke-width="1.2"/><line x1="1961.5" y1="235" x2="1961.5" y2="239" stroke="#8a8a8a" stroke-width="1.2"/><line x1="1993.3" y1="235" x2="1993.3" y2="239" stroke="#8a8a8a" stroke-width="1.2"/><line x1="2009.2" y1="232" x2="2009.2" y2="239" stroke="#8a8a8a" stroke-width="1.2"/><line x1="2025.1" y1="235" x2="2025.1" y2="239" stroke="#8a8a8a" stroke-width="1.2"/><line x1="2056.9" y1="235" x2="2056.9" y2="239" stroke="#8a8a8a" stroke-width="1.2"/><line x1="2072.8" y1="232" x2="2072.8" y2="239" stroke="#8a8a8a" stroke-width="1.2"/><line x1="2088.7" y1="235" x2="2088.7" y2="239" stroke="#8a8a8a" stroke-width="1.2"/><line x1="2120.5" y1="235" x2="2120.5" y2="239" stroke="#8a8a8a" stroke-width="1.2"/><line x1="2136.4" y1="232" x2="2136.4" y2="239" stroke="#8a8a8a" stroke-width="1.2"/><line x1="168" y1="242.7" x2="173" y2="242.7" stroke="#8a8a8a" stroke-width="1.2"/><line x1="164" y1="258.6" x2="173" y2="258.6" stroke="#8a8a8a" stroke-width="1.2"/><line x1="168" y1="274.5" x2="173" y2="274.5" stroke="#8a8a8a" stroke-width="1.2"/><line x1="168" y1="306.3" x2="173" y2="306.3" stroke="#8a8a8a" stroke-width="1.2"/><line x1="164" y1="322.2" x2="173" y2="322.2" stroke="#8a8a8a" stroke-width="1.2"/><line x1="168" y1="338.1" x2="173" y2="338.1" stroke="#8a8a8a" stroke-width="1.2"/><line x1="168" y1="369.9" x2="173" y2="369.9" stroke="#8a8a8a" stroke-width="1.2"/><line x1="164" y1="385.8" x2="173" y2="385.8" stroke="#8a8a8a" stroke-width="1.2"/><line x1="168" y1="401.7" x2="173" y2="401.7" stroke="#8a8a8a" stroke-width="1.2"/><line x1="168" y1="433.5" x2="173" y2="433.5" stroke="#8a8a8a" stroke-width="1.2"/><line x1="164" y1="449.4" x2="173" y2="449.4" stroke="#8a8a8a" stroke-width="1.2"/><line x1="168" y1="465.3" x2="173" y2="465.3" stroke="#8a8a8a" stroke-width="1.2"/><line x1="168" y1="497.1" x2="173" y2="497.1" stroke="#8a8a8a" stroke-width="1.2"/><line x1="164" y1="513.0" x2="173" y2="513.0" stroke="#8a8a8a" stroke-width="1.2"/><line x1="168" y1="528.9" x2="173" y2="528.9" stroke="#8a8a8a" stroke-width="1.2"/><line x1="168" y1="560.7" x2="173" y2="560.7" stroke="#8a8a8a" stroke-width="1.2"/><line x1="164" y1="576.6" x2="173" y2="576.6" stroke="#8a8a8a" stroke-width="1.2"/><line x1="168" y1="592.5" x2="173" y2="592.5" stroke="#8a8a8a" stroke-width="1.2"/><line x1="168" y1="624.3" x2="173" y2="624.3" stroke="#8a8a8a" stroke-width="1.2"/><line x1="164" y1="640.2" x2="173" y2="640.2" stroke="#8a8a8a" stroke-width="1.2"/><line x1="168" y1="656.1" x2="173" y2="656.1" stroke="#8a8a8a" stroke-width="1.2"/><line x1="168" y1="687.9" x2="173" y2="687.9" stroke="#8a8a8a" stroke-width="1.2"/><line x1="164" y1="703.8" x2="173" y2="703.8" stroke="#8a8a8a" stroke-width="1.2"/><line x1="168" y1="719.7" x2="173" y2="719.7" stroke="#8a8a8a" stroke-width="1.2"/><line x1="168" y1="751.5" x2="173" y2="751.5" stroke="#8a8a8a" stroke-width="1.2"/><line x1="164" y1="767.4" x2="173" y2="767.4" stroke="#8a8a8a" stroke-width="1.2"/><line x1="168" y1="783.3" x2="173" y2="783.3" stroke="#8a8a8a" stroke-width="1.2"/><line x1="168" y1="815.1" x2="173" y2="815.1" stroke="#8a8a8a" stroke-width="1.2"/><line x1="164" y1="831.0" x2="173" y2="831.0" stroke="#8a8a8a" stroke-width="1.2"/><line x1="168" y1="846.9" x2="173" y2="846.9" stroke="#8a8a8a" stroke-width="1.2"/><line x1="168" y1="878.7" x2="173" y2="878.7" stroke="#8a8a8a" stroke-width="1.2"/><line x1="164" y1="894.6" x2="173" y2="894.6" stroke="#8a8a8a" stroke-width="1.2"/><line x1="168" y1="910.5" x2="173" y2="910.5" stroke="#8a8a8a" stroke-width="1.2"/><line x1="168" y1="942.3" x2="173" y2="942.3" stroke="#8a8a8a" stroke-width="1.2"/><line x1="164" y1="958.2" x2="173" y2="958.2" stroke="#8a8a8a" stroke-width="1.2"/><line x1="168" y1="974.1" x2="173" y2="974.1" stroke="#8a8a8a" stroke-width="1.2"/><line x1="168" y1="1005.9" x2="173" y2="1005.9" stroke="#8a8a8a" stroke-width="1.2"/><line x1="164" y1="1021.8" x2="173" y2="1021.8" stroke="#8a8a8a" stroke-width="1.2"/><line x1="168" y1="1037.7" x2="173" y2="1037.7" stroke="#8a8a8a" stroke-width="1.2"/><line x1="168" y1="1069.5" x2="173" y2="1069.5" stroke="#8a8a8a" stroke-width="1.2"/><line x1="164" y1="1085.4" x2="173" y2="1085.4" stroke="#8a8a8a" stroke-width="1.2"/><line x1="168" y1="1101.3" x2="173" y2="1101.3" stroke="#8a8a8a" stroke-width="1.2"/><line x1="168" y1="1133.1" x2="173" y2="1133.1" stroke="#8a8a8a" stroke-width="1.2"/><line x1="164" y1="1149.0" x2="173" y2="1149.0" stroke="#8a8a8a" stroke-width="1.2"/><line x1="168" y1="1164.9" x2="173" y2="1164.9" stroke="#8a8a8a" stroke-width="1.2"/><line x1="168" y1="1196.7" x2="173" y2="1196.7" stroke="#8a8a8a" stroke-width="1.2"/><line x1="164" y1="1212.6" x2="173" y2="1212.6" stroke="#8a8a8a" stroke-width="1.2"/><line x1="168" y1="1228.5" x2="173" y2="1228.5" stroke="#8a8a8a" stroke-width="1.2"/><line x1="168" y1="1260.3" x2="173" y2="1260.3" stroke="#8a8a8a" stroke-width="1.2"/><line x1="164" y1="1276.2" x2="173" y2="1276.2" stroke="#8a8a8a" stroke-width="1.2"/><line x1="168" y1="1292.1" x2="173" y2="1292.1" stroke="#8a8a8a" stroke-width="1.2"/><line x1="168" y1="1323.9" x2="173" y2="1323.9" stroke="#8a8a8a" stroke-width="1.2"/><line x1="164" y1="1339.8" x2="173" y2="1339.8" stroke="#8a8a8a" stroke-width="1.2"/><line x1="168" y1="1355.7" x2="173" y2="1355.7" stroke="#8a8a8a" stroke-width="1.2"/><line x1="168" y1="1387.5" x2="173" y2="1387.5" stroke="#8a8a8a" stroke-width="1.2"/><line x1="164" y1="1403.4" x2="173" y2="1403.4" stroke="#8a8a8a" stroke-width="1.2"/><line x1="168" y1="1419.3" x2="173" y2="1419.3" stroke="#8a8a8a" stroke-width="1.2"/><line x1="168" y1="1451.1" x2="173" y2="1451.1" stroke="#8a8a8a" stroke-width="1.2"/><line x1="164" y1="1467.0" x2="173" y2="1467.0" stroke="#8a8a8a" stroke-width="1.2"/><line x1="168" y1="1482.9" x2="173" y2="1482.9" stroke="#8a8a8a" stroke-width="1.2"/><line x1="168" y1="1514.7" x2="173" y2="1514.7" stroke="#8a8a8a" stroke-width="1.2"/><line x1="164" y1="1530.6" x2="173" y2="1530.6" stroke="#8a8a8a" stroke-width="1.2"/><line x1="168" y1="1546.5" x2="173" y2="1546.5" stroke="#8a8a8a" stroke-width="1.2"/><line x1="168" y1="1578.3" x2="173" y2="1578.3" stroke="#8a8a8a" stroke-width="1.2"/></svg>
<div class="t" style="left:142px;top:244.3px;font-size:17px;color:#d4d4d4;width:14px;text-align:center;transform:scaleX(0.8)">0</div>
<div class="t" style="left:142px;top:259.8px;font-size:17px;color:#d4d4d4;width:14px;text-align:center;transform:scaleX(0.8)">0</div>
<div class="t" style="left:142px;top:292.4px;font-size:17px;color:#d4d4d4;width:14px;text-align:center;transform:scaleX(0.8)">2</div>
<div class="t" style="left:142px;top:307.9px;font-size:17px;color:#d4d4d4;width:14px;text-align:center;transform:scaleX(0.8)">0</div>
<div class="t" style="left:142px;top:323.4px;font-size:17px;color:#d4d4d4;width:14px;text-align:center;transform:scaleX(0.8)">0</div>
<div class="t" style="left:142px;top:356.0px;font-size:20px;color:#cfcfcf;width:14px;text-align:center;transform:scaleX(1)">0</div>
<div class="t" style="left:142px;top:419.6px;font-size:17px;color:#d4d4d4;width:14px;text-align:center;transform:scaleX(0.8)">2</div>
<div class="t" style="left:142px;top:435.1px;font-size:17px;color:#d4d4d4;width:14px;text-align:center;transform:scaleX(0.8)">0</div>
<div class="t" style="left:142px;top:450.6px;font-size:17px;color:#d4d4d4;width:14px;text-align:center;transform:scaleX(0.8)">0</div>
<div class="t" style="left:142px;top:483.2px;font-size:17px;color:#d4d4d4;width:14px;text-align:center;transform:scaleX(0.8)">4</div>
<div class="t" style="left:142px;top:498.7px;font-size:17px;color:#d4d4d4;width:14px;text-align:center;transform:scaleX(0.8)">0</div>
<div class="t" style="left:142px;top:514.2px;font-size:17px;color:#d4d4d4;width:14px;text-align:center;transform:scaleX(0.8)">0</div>
<div class="t" style="left:142px;top:546.8px;font-size:17px;color:#d4d4d4;width:14px;text-align:center;transform:scaleX(0.8)">6</div>
<div class="t" style="left:142px;top:562.3px;font-size:17px;color:#d4d4d4;width:14px;text-align:center;transform:scaleX(0.8)">0</div>
<div class="t" style="left:142px;top:577.8px;font-size:17px;color:#d4d4d4;width:14px;text-align:center;transform:scaleX(0.8)">0</div>
<div class="t" style="left:142px;top:610.4px;font-size:17px;color:#d4d4d4;width:14px;text-align:center;transform:scaleX(0.8)">8</div>
<div class="t" style="left:142px;top:625.9px;font-size:17px;color:#d4d4d4;width:14px;text-align:center;transform:scaleX(0.8)">0</div>
<div class="t" style="left:142px;top:641.4px;font-size:17px;color:#d4d4d4;width:14px;text-align:center;transform:scaleX(0.8)">0</div>
<div class="t" style="left:142px;top:674.0px;font-size:15px;color:#d4d4d4;width:14px;text-align:center;transform:scaleX(0.8)">1</div>
<div class="t" style="left:142px;top:686.6px;font-size:15px;color:#d4d4d4;width:14px;text-align:center;transform:scaleX(0.8)">0</div>
<div class="t" style="left:142px;top:699.2px;font-size:15px;color:#d4d4d4;width:14px;text-align:center;transform:scaleX(0.8)">0</div>
<div class="t" style="left:142px;top:711.8px;font-size:15px;color:#d4d4d4;width:14px;text-align:center;transform:scaleX(0.8)">0</div>
<div class="t" style="left:142px;top:737.6px;font-size:15px;color:#d4d4d4;width:14px;text-align:center;transform:scaleX(0.8)">1</div>
<div class="t" style="left:142px;top:750.2px;font-size:15px;color:#d4d4d4;width:14px;text-align:center;transform:scaleX(0.8)">2</div>
<div class="t" style="left:142px;top:762.8px;font-size:15px;color:#d4d4d4;width:14px;text-align:center;transform:scaleX(0.8)">0</div>
<div class="t" style="left:142px;top:775.4px;font-size:15px;color:#d4d4d4;width:14px;text-align:center;transform:scaleX(0.8)">0</div>
<div class="t" style="left:142px;top:801.2px;font-size:15px;color:#d4d4d4;width:14px;text-align:center;transform:scaleX(0.8)">1</div>
<div class="t" style="left:142px;top:813.8px;font-size:15px;color:#d4d4d4;width:14px;text-align:center;transform:scaleX(0.8)">4</div>
<div class="t" style="left:142px;top:826.4px;font-size:15px;color:#d4d4d4;width:14px;text-align:center;transform:scaleX(0.8)">0</div>
<div class="t" style="left:142px;top:839.0px;font-size:15px;color:#d4d4d4;width:14px;text-align:center;transform:scaleX(0.8)">0</div>
<div class="t" style="left:142px;top:864.8px;font-size:15px;color:#d4d4d4;width:14px;text-align:center;transform:scaleX(0.8)">1</div>
<div class="t" style="left:142px;top:877.4px;font-size:15px;color:#d4d4d4;width:14px;text-align:center;transform:scaleX(0.8)">6</div>
<div class="t" style="left:142px;top:890.0px;font-size:15px;color:#d4d4d4;width:14px;text-align:center;transform:scaleX(0.8)">0</div>
<div class="t" style="left:142px;top:902.6px;font-size:15px;color:#d4d4d4;width:14px;text-align:center;transform:scaleX(0.8)">0</div>
<div class="t" style="left:142px;top:928.4px;font-size:15px;color:#d4d4d4;width:14px;text-align:center;transform:scaleX(0.8)">1</div>
<div class="t" style="left:142px;top:941.0px;font-size:15px;color:#d4d4d4;width:14px;text-align:center;transform:scaleX(0.8)">8</div>
<div class="t" style="left:142px;top:953.6px;font-size:15px;color:#d4d4d4;width:14px;text-align:center;transform:scaleX(0.8)">0</div>
<div class="t" style="left:142px;top:966.2px;font-size:15px;color:#d4d4d4;width:14px;text-align:center;transform:scaleX(0.8)">0</div>
<div class="t" style="left:142px;top:992.0px;font-size:15px;color:#d4d4d4;width:14px;text-align:center;transform:scaleX(0.8)">2</div>
<div class="t" style="left:142px;top:1004.6px;font-size:15px;color:#d4d4d4;width:14px;text-align:center;transform:scaleX(0.8)">0</div>
<div class="t" style="left:142px;top:1017.2px;font-size:15px;color:#d4d4d4;width:14px;text-align:center;transform:scaleX(0.8)">0</div>
<div class="t" style="left:142px;top:1029.8px;font-size:15px;color:#d4d4d4;width:14px;text-align:center;transform:scaleX(0.8)">0</div>
<div class="t" style="left:142px;top:1055.6px;font-size:15px;color:#d4d4d4;width:14px;text-align:center;transform:scaleX(0.8)">2</div>
<div class="t" style="left:142px;top:1068.2px;font-size:15px;color:#d4d4d4;width:14px;text-align:center;transform:scaleX(0.8)">2</div>
<div class="t" style="left:142px;top:1080.8px;font-size:15px;color:#d4d4d4;width:14px;text-align:center;transform:scaleX(0.8)">0</div>
<div class="t" style="left:142px;top:1093.4px;font-size:15px;color:#d4d4d4;width:14px;text-align:center;transform:scaleX(0.8)">0</div>
<div class="t" style="left:142px;top:1119.2px;font-size:15px;color:#d4d4d4;width:14px;text-align:center;transform:scaleX(0.8)">2</div>
<div class="t" style="left:142px;top:1131.8px;font-size:15px;color:#d4d4d4;width:14px;text-align:center;transform:scaleX(0.8)">4</div>
<div class="t" style="left:142px;top:1144.4px;font-size:15px;color:#d4d4d4;width:14px;text-align:center;transform:scaleX(0.8)">0</div>
<div class="t" style="left:142px;top:1157.0px;font-size:15px;color:#d4d4d4;width:14px;text-align:center;transform:scaleX(0.8)">0</div>
<div class="t" style="left:142px;top:1182.8px;font-size:15px;color:#d4d4d4;width:14px;text-align:center;transform:scaleX(0.8)">2</div>
<div class="t" style="left:142px;top:1195.4px;font-size:15px;color:#d4d4d4;width:14px;text-align:center;transform:scaleX(0.8)">6</div>
<div class="t" style="left:142px;top:1208.0px;font-size:15px;color:#d4d4d4;width:14px;text-align:center;transform:scaleX(0.8)">0</div>
<div class="t" style="left:142px;top:1220.6px;font-size:15px;color:#d4d4d4;width:14px;text-align:center;transform:scaleX(0.8)">0</div>
<div class="t" style="left:142px;top:1246.4px;font-size:15px;color:#d4d4d4;width:14px;text-align:center;transform:scaleX(0.8)">2</div>
<div class="t" style="left:142px;top:1259.0px;font-size:15px;color:#d4d4d4;width:14px;text-align:center;transform:scaleX(0.8)">8</div>
<div class="t" style="left:142px;top:1271.6px;font-size:15px;color:#d4d4d4;width:14px;text-align:center;transform:scaleX(0.8)">0</div>
<div class="t" style="left:142px;top:1284.2px;font-size:15px;color:#d4d4d4;width:14px;text-align:center;transform:scaleX(0.8)">0</div>
<div class="t" style="left:142px;top:1310.0px;font-size:15px;color:#d4d4d4;width:14px;text-align:center;transform:scaleX(0.8)">3</div>
<div class="t" style="left:142px;top:1322.6px;font-size:15px;color:#d4d4d4;width:14px;text-align:center;transform:scaleX(0.8)">0</div>
<div class="t" style="left:142px;top:1335.2px;font-size:15px;color:#d4d4d4;width:14px;text-align:center;transform:scaleX(0.8)">0</div>
<div class="t" style="left:142px;top:1347.8px;font-size:15px;color:#d4d4d4;width:14px;text-align:center;transform:scaleX(0.8)">0</div>
<div class="t" style="left:142px;top:1373.6px;font-size:15px;color:#d4d4d4;width:14px;text-align:center;transform:scaleX(0.8)">3</div>
<div class="t" style="left:142px;top:1386.2px;font-size:15px;color:#d4d4d4;width:14px;text-align:center;transform:scaleX(0.8)">2</div>
<div class="t" style="left:142px;top:1398.8px;font-size:15px;color:#d4d4d4;width:14px;text-align:center;transform:scaleX(0.8)">0</div>
<div class="t" style="left:142px;top:1411.4px;font-size:15px;color:#d4d4d4;width:14px;text-align:center;transform:scaleX(0.8)">0</div>
<div class="t" style="left:142px;top:1437.2px;font-size:15px;color:#d4d4d4;width:14px;text-align:center;transform:scaleX(0.8)">3</div>
<div class="t" style="left:142px;top:1449.8px;font-size:15px;color:#d4d4d4;width:14px;text-align:center;transform:scaleX(0.8)">4</div>
<div class="t" style="left:142px;top:1462.4px;font-size:15px;color:#d4d4d4;width:14px;text-align:center;transform:scaleX(0.8)">0</div>
<div class="t" style="left:142px;top:1475.0px;font-size:15px;color:#d4d4d4;width:14px;text-align:center;transform:scaleX(0.8)">0</div>
<div class="t" style="left:142px;top:1500.8px;font-size:15px;color:#d4d4d4;width:14px;text-align:center;transform:scaleX(0.8)">3</div>
<div class="t" style="left:142px;top:1513.4px;font-size:15px;color:#d4d4d4;width:14px;text-align:center;transform:scaleX(0.8)">6</div>
<div class="t" style="left:142px;top:1526.0px;font-size:15px;color:#d4d4d4;width:14px;text-align:center;transform:scaleX(0.8)">0</div>
<div class="t" style="left:142px;top:1538.6px;font-size:15px;color:#d4d4d4;width:14px;text-align:center;transform:scaleX(0.8)">0</div>
<div class="t" style="left:142px;top:1564.4px;font-size:15px;color:#d4d4d4;width:14px;text-align:center;transform:scaleX(0.8)">3</div>
<div class="a" style="left:2152px;top:206px;width:31px;height:33px;background:#5e5e5e"></div>
<!-- document -->
<div class="a" style="left:767px;top:350px;width:793px;height:1120px;background:#1b1b1d"></div>
<div class="a" style="left:769px;top:352px;width:789px;height:1116px;background:#fff"></div>

<!-- animals -->
<svg style="left:0;top:0" width="2880" height="1613">
<g transform="translate(990 590) scale(0.23568)">
<path d="M680 430 C689 461 698 532 700 560 C702 588 700 587 690 600 C680 613 662 628 640 640 C618 652 590 662 560 670 C530 678 493 682 460 690 C427 698 388 708 360 720 C332 732 310 747 290 760 C270 773 258 788 240 800 C222 812 189 822 185 830 C181 838 209 838 215 850 C221 862 220 882 220 900 C220 918 215 940 215 960 C215 980 222 1003 220 1020 C218 1037 210 1049 200 1060 C190 1071 160 1070 160 1085 C160 1100 187 1126 200 1150 C213 1174 228 1203 240 1230 C252 1257 260 1282 270 1310 C280 1338 285 1386 300 1400 C315 1414 353 1407 360 1395 C367 1383 352 1359 340 1330 C328 1301 302 1255 290 1220 C278 1185 263 1123 270 1120 C277 1117 312 1177 330 1200 C348 1223 367 1238 380 1260 C393 1282 402 1312 410 1330 C418 1348 417 1367 430 1370 C443 1373 483 1362 490 1350 C497 1338 483 1322 470 1300 C457 1278 428 1250 410 1220 C392 1190 373 1148 360 1120 C347 1092 325 1070 330 1050 C335 1030 368 1017 390 1000 C412 983 425 963 460 950 C495 937 557 928 600 920 C643 912 682 908 720 900 C758 892 803 880 830 870 C857 860 860 843 880 840 C900 837 920 852 950 850 C980 848 1035 830 1060 830 C1085 830 1092 835 1100 850 C1108 865 1107 895 1105 920 C1103 945 1095 973 1090 1000 C1085 1027 1082 1058 1075 1080 C1068 1102 1052 1115 1045 1130 C1038 1145 1024 1164 1030 1170 C1036 1176 1069 1173 1080 1165 C1091 1157 1090 1138 1095 1120 C1100 1102 1105 1082 1110 1060 C1115 1038 1121 1017 1125 990 C1129 963 1135 928 1135 900 C1135 872 1132 838 1125 820 C1118 802 1111 797 1090 790 C1069 783 1022 785 1000 780 C978 775 953 766 960 760 C967 754 1015 752 1040 745 C1065 738 1092 722 1110 715 C1128 708 1139 696 1150 700 C1161 704 1170 715 1175 740 C1180 765 1181 817 1182 850 C1183 883 1183 920 1180 940 C1177 960 1168 959 1165 970 C1162 981 1152 999 1160 1005 C1168 1011 1206 1016 1215 1005 C1224 994 1212 966 1212 940 C1212 914 1215 887 1215 850 C1215 813 1214 752 1210 720 C1206 688 1200 668 1190 655 C1180 642 1165 641 1150 645 C1135 649 1120 668 1100 680 C1080 692 1042 715 1030 715 C1018 715 1025 696 1025 680 C1025 664 1031 640 1030 620 C1029 600 1027 580 1020 560 C1013 540 1005 522 990 500 C975 478 952 449 930 430 C908 411 882 396 860 385 C838 374 817 369 800 365 C783 361 769 364 760 360 C751 356 740 346 745 340 C750 334 769 326 790 325 C811 324 845 334 870 335 C895 336 934 337 940 332 C946 327 898 315 905 305 C912 295 981 281 985 270 C989 259 949 250 930 240 C911 230 887 218 870 210 C853 202 843 201 830 195 C817 189 804 177 790 175 C776 173 760 176 745 185 C730 194 714 212 700 230 C686 248 673 273 660 290 C647 307 632 315 620 330 C608 345 586 373 590 380 C594 387 630 364 645 372 C660 380 671 399 680 430Z" fill="#f9a98d"/>
<g fill="#f9a98d"><path d="M699 186 L695 186 L692 186 L688 187 L683 187 L679 188 L673 188 L668 189 L662 189 L656 190 L650 190 L644 191 L637 192 L631 192 L624 193 L617 193 L611 194 L604 195 L597 195 L590 196 L584 196 L577 197 L571 197 L565 198 L559 198 L553 199 L547 199 L541 200 L536 200 L530 201 L524 201 L518 202 L513 202 L507 203 L501 204 L495 204 L490 205 L484 205 L478 205 L472 206 L467 206 L461 207 L455 207 L449 207 L444 208 L438 208 L432 208 L426 208 L420 208 L414 208 L408 208 L402 208 L395 208 L389 208 L383 209 L376 209 L370 209 L363 209 L357 208 L351 208 L344 208 L338 208 L332 208 L325 208 L319 207 L313 207 L307 206 L301 206 L295 205 L289 204 L284 203 L278 202 L272 201 L267 200 L262 199 L257 197 L251 196 L246 194 L241 192 L236 191 L231 189 L226 187 L221 185 L216 183 L211 180 L206 178 L202 176 L197 174 L192 171 L187 169 L182 167 L178 164 L173 162 L168 160 L163 157 L158 155 L154 153 L149 150 L144 148 L139 146 L134 143 L129 140 L124 138 L119 135 L114 132 L108 129 L103 126 L98 124 L93 121 L89 118 L84 116 L79 113 L75 110 L71 108 L67 106 L63 104 L59 102 L56 100 L53 98 L50 97 L48 95 L42 105 L45 106 L47 108 L50 110 L53 112 L57 114 L60 116 L64 119 L68 121 L73 124 L77 127 L82 130 L87 133 L91 136 L96 139 L101 142 L106 145 L111 148 L117 151 L122 154 L127 157 L132 159 L137 162 L142 165 L146 167 L151 170 L156 172 L160 175 L165 177 L169 180 L174 182 L179 185 L184 188 L188 190 L193 193 L198 195 L203 198 L208 200 L213 203 L218 205 L223 207 L229 210 L234 212 L239 214 L245 216 L250 218 L256 220 L262 221 L268 223 L273 224 L279 225 L286 227 L292 228 L298 229 L304 230 L311 230 L317 231 L324 232 L330 232 L337 233 L343 233 L350 234 L356 234 L363 234 L369 234 L376 235 L382 235 L389 235 L395 235 L401 235 L408 236 L414 236 L420 236 L426 236 L432 236 L438 236 L444 236 L450 236 L456 236 L462 236 L468 236 L474 236 L480 235 L486 235 L492 235 L497 235 L503 234 L509 234 L515 234 L521 234 L526 233 L532 233 L538 233 L544 232 L549 232 L555 232 L561 232 L567 231 L573 231 L580 231 L586 231 L593 230 L599 230 L606 229 L613 229 L620 229 L627 228 L633 228 L640 228 L647 227 L653 227 L659 227 L665 226 L671 226 L676 226 L681 225 L686 225 L691 225 L695 225 L698 225 L701 224Z"/><path d="M701 233 L699 235 L696 236 L693 237 L690 239 L686 240 L683 242 L679 244 L675 246 L671 248 L666 250 L662 252 L657 254 L652 256 L647 258 L642 260 L637 263 L632 265 L627 267 L621 270 L616 272 L610 274 L604 277 L599 279 L593 281 L587 284 L581 286 L575 288 L568 291 L562 293 L555 296 L548 298 L540 301 L533 303 L526 306 L518 309 L511 311 L503 314 L495 317 L488 319 L480 322 L473 325 L465 328 L458 330 L451 333 L444 336 L437 339 L430 342 L423 345 L417 348 L411 351 L405 354 L399 357 L393 361 L387 364 L381 367 L376 370 L370 374 L365 377 L360 380 L354 384 L349 387 L344 390 L339 393 L334 396 L329 399 L324 402 L319 405 L314 408 L309 411 L305 413 L300 416 L295 418 L290 420 L285 423 L280 425 L275 427 L270 429 L265 432 L260 434 L255 436 L250 438 L245 439 L240 441 L235 443 L230 445 L226 447 L221 448 L216 450 L211 451 L206 453 L202 454 L197 456 L192 457 L187 458 L183 460 L178 461 L173 462 L169 463 L164 464 L159 465 L153 466 L148 466 L143 467 L138 468 L133 468 L127 469 L122 469 L117 470 L112 470 L107 471 L102 471 L98 471 L93 472 L89 472 L85 472 L82 473 L78 473 L75 473 L72 474 L70 474 L70 486 L73 486 L76 486 L79 486 L82 486 L86 486 L90 486 L94 486 L98 486 L103 486 L108 486 L113 485 L118 485 L123 485 L128 485 L134 485 L139 484 L145 484 L150 483 L156 483 L161 482 L166 482 L172 481 L177 480 L182 479 L187 478 L192 477 L197 476 L202 475 L207 474 L212 473 L217 472 L222 470 L227 469 L232 467 L237 466 L242 464 L247 463 L253 461 L258 459 L263 458 L268 456 L273 454 L279 452 L284 450 L289 448 L295 446 L300 444 L305 442 L311 440 L316 437 L322 435 L327 432 L332 429 L338 426 L343 424 L348 421 L353 418 L359 415 L364 412 L369 409 L375 406 L380 403 L385 400 L391 397 L396 394 L402 391 L407 388 L413 386 L419 383 L425 380 L431 378 L437 375 L443 373 L449 370 L456 368 L463 365 L470 363 L477 360 L484 358 L492 355 L499 353 L507 350 L514 348 L522 346 L530 343 L537 341 L545 339 L552 336 L560 334 L567 332 L574 330 L581 327 L588 325 L594 323 L601 321 L607 319 L613 317 L619 314 L625 312 L631 310 L636 308 L642 306 L648 304 L653 302 L659 300 L664 298 L669 296 L674 294 L679 292 L684 290 L688 288 L692 287 L697 285 L700 283 L704 282 L708 281 L711 280 L714 278 L716 277 L719 277Z"/><path d="M308 420 L306 419 L303 418 L300 416 L297 414 L294 413 L291 411 L287 408 L283 406 L279 404 L275 401 L271 399 L266 396 L262 394 L257 391 L253 388 L248 386 L244 383 L239 381 L235 378 L231 376 L226 373 L222 371 L218 369 L214 367 L211 365 L207 363 L203 362 L199 360 L195 358 L191 356 L187 354 L183 353 L179 351 L175 349 L171 347 L167 346 L163 344 L160 343 L156 341 L153 340 L149 339 L146 337 L143 336 L141 335 L138 334 L136 333 L133 332 L132 332 L128 338 L130 339 L132 341 L134 342 L137 343 L139 345 L142 346 L145 348 L148 350 L151 351 L155 353 L158 355 L162 357 L165 359 L169 361 L173 363 L176 365 L180 367 L184 370 L188 372 L191 374 L195 376 L199 378 L202 381 L206 383 L209 385 L213 387 L216 390 L220 393 L224 395 L228 398 L233 401 L237 404 L241 407 L245 410 L250 413 L254 416 L258 419 L262 422 L266 424 L269 427 L273 430 L277 432 L280 435 L283 437 L286 439 L288 441 L290 443 L292 444Z"/><path d="M436 359 L433 356 L430 352 L426 347 L421 343 L417 338 L412 332 L407 326 L401 320 L396 314 L390 307 L384 300 L378 293 L372 286 L366 279 L359 272 L353 264 L347 257 L341 250 L335 243 L329 236 L323 229 L317 222 L312 216 L307 210 L302 203 L297 197 L292 191 L287 184 L281 177 L276 170 L271 163 L265 157 L260 150 L255 143 L250 136 L245 129 L240 123 L235 116 L230 110 L226 104 L222 98 L217 93 L214 88 L210 83 L206 79 L203 75 L200 71 L198 68 L192 72 L194 75 L197 79 L199 84 L203 88 L206 93 L209 99 L213 104 L217 110 L221 117 L226 123 L230 130 L235 137 L239 144 L244 151 L249 158 L254 165 L259 172 L264 179 L269 186 L274 193 L279 200 L283 207 L288 214 L293 220 L298 227 L303 234 L308 241 L313 248 L319 255 L325 263 L331 270 L337 278 L342 285 L348 293 L354 301 L360 308 L366 315 L371 322 L377 329 L382 336 L387 342 L392 349 L397 354 L401 360 L405 365 L408 369 L411 373 L414 377Z"/><path d="M601 293 L599 291 L598 289 L596 286 L594 283 L591 280 L589 277 L586 273 L584 270 L581 266 L578 262 L575 258 L572 254 L569 250 L566 245 L563 241 L560 237 L557 232 L554 228 L551 224 L548 220 L545 216 L542 212 L539 209 L537 205 L534 202 L532 198 L529 195 L526 191 L523 188 L520 184 L518 181 L515 177 L512 174 L509 170 L506 167 L504 163 L501 160 L498 157 L496 154 L493 151 L491 148 L489 145 L486 143 L484 140 L483 138 L481 136 L479 134 L478 133 L472 137 L473 139 L474 141 L476 143 L477 146 L479 148 L481 151 L483 154 L485 157 L487 160 L489 163 L492 167 L494 170 L496 174 L499 178 L501 181 L504 185 L506 189 L509 193 L511 196 L514 200 L516 204 L519 208 L521 211 L523 215 L525 218 L528 222 L530 226 L533 230 L536 235 L538 239 L541 243 L544 248 L546 252 L549 257 L552 261 L555 266 L557 270 L560 274 L562 278 L565 282 L567 286 L569 290 L571 293 L573 297 L575 300 L577 303 L578 305 L579 307Z"/><path d="M433 223 L433 221 L432 219 L432 217 L432 214 L431 211 L431 208 L430 205 L430 202 L430 198 L429 194 L429 191 L428 187 L428 183 L427 179 L427 175 L427 171 L426 167 L426 162 L425 158 L425 155 L424 151 L424 147 L423 143 L423 140 L423 136 L422 132 L422 128 L421 124 L421 120 L420 116 L420 112 L419 108 L419 104 L419 100 L418 96 L418 92 L417 88 L417 84 L416 80 L416 77 L416 73 L415 70 L415 67 L414 64 L414 61 L414 59 L413 57 L413 55 L407 55 L407 57 L407 59 L407 62 L407 64 L407 67 L407 71 L407 74 L407 77 L407 81 L407 85 L407 89 L407 93 L407 97 L407 101 L407 105 L407 109 L407 113 L407 117 L407 121 L407 125 L407 129 L407 133 L407 137 L407 140 L407 144 L407 148 L407 152 L407 156 L407 160 L407 164 L407 168 L407 172 L407 176 L407 180 L407 184 L407 188 L407 192 L407 196 L407 199 L407 203 L407 206 L407 210 L407 213 L407 216 L407 218 L407 221 L407 223 L407 225Z"/><path d="M603 217 L603 215 L603 213 L602 210 L602 208 L602 205 L602 201 L602 198 L601 194 L601 191 L601 187 L601 183 L600 179 L600 175 L600 171 L600 166 L600 162 L599 158 L599 154 L599 149 L599 145 L599 141 L598 137 L598 134 L598 130 L598 126 L598 123 L597 119 L597 115 L597 111 L597 107 L597 103 L596 98 L596 94 L596 90 L596 86 L596 82 L595 78 L595 74 L595 71 L595 67 L594 64 L594 60 L594 57 L594 54 L594 52 L593 49 L593 47 L593 45 L587 45 L587 47 L587 49 L586 52 L586 54 L586 57 L586 60 L586 64 L585 67 L585 71 L585 74 L585 78 L584 82 L584 86 L584 90 L584 94 L584 98 L583 103 L583 107 L583 111 L583 115 L583 119 L582 123 L582 126 L582 130 L582 134 L582 137 L581 141 L581 145 L581 149 L581 154 L581 158 L580 162 L580 166 L580 171 L580 175 L580 179 L579 183 L579 187 L579 191 L579 194 L578 198 L578 201 L578 205 L578 208 L578 210 L577 213 L577 215 L577 217Z"/><path d="M709 278 L709 275 L709 272 L710 268 L710 265 L710 261 L710 256 L710 252 L711 247 L711 242 L711 237 L711 232 L712 226 L712 221 L713 215 L713 210 L713 204 L714 198 L714 193 L715 187 L715 182 L715 177 L716 171 L716 166 L716 162 L717 157 L717 152 L718 147 L718 142 L718 136 L719 131 L719 126 L720 120 L720 115 L721 110 L721 104 L722 99 L722 94 L723 89 L723 84 L724 79 L724 75 L724 71 L725 66 L725 63 L725 59 L725 56 L725 53 L726 51 L718 49 L718 52 L717 55 L716 58 L715 61 L714 65 L713 69 L712 73 L711 77 L710 82 L709 87 L708 92 L707 97 L706 102 L705 107 L704 112 L702 118 L701 123 L700 128 L699 133 L698 139 L697 144 L696 149 L695 154 L694 158 L693 163 L692 168 L690 173 L689 178 L688 184 L687 189 L686 195 L685 200 L684 206 L683 211 L682 217 L681 222 L680 228 L679 233 L678 238 L677 243 L676 248 L675 252 L674 256 L674 260 L673 264 L672 267 L671 270 L671 272Z"/><path d="M758 217 L758 215 L759 213 L760 211 L761 208 L762 205 L764 202 L765 199 L766 196 L768 193 L769 189 L771 186 L773 182 L774 179 L776 175 L778 171 L779 167 L781 164 L783 160 L785 156 L786 153 L788 149 L790 146 L791 142 L793 139 L794 136 L796 133 L797 129 L799 126 L801 123 L802 119 L804 116 L806 112 L807 109 L809 105 L811 102 L813 98 L814 95 L816 92 L817 88 L819 85 L820 82 L822 80 L823 77 L824 75 L825 72 L826 70 L827 68 L828 66 L822 64 L821 65 L820 67 L819 69 L817 71 L816 73 L814 75 L812 78 L810 81 L808 83 L807 86 L805 89 L802 92 L800 96 L798 99 L796 102 L794 105 L792 109 L790 112 L788 115 L785 118 L783 122 L781 125 L779 128 L777 131 L776 134 L774 137 L772 140 L769 144 L767 147 L765 150 L763 154 L761 157 L759 161 L757 165 L754 168 L752 172 L750 175 L748 178 L746 181 L744 185 L743 188 L741 190 L739 193 L738 196 L736 198 L735 200 L733 202 L732 203Z"/></g>
<circle cx="800" cy="245" r="9" fill="#fff"/>
<g fill="none" stroke="#fff" stroke-width="6" stroke-linecap="round"><path d="M890 750 C930 770 970 790 1010 795"/><path d="M820 830 C860 860 880 870 900 875"/><path d="M465 830 C450 900 420 960 370 1000"/><path d="M640 385 C680 370 720 375 760 390"/></g>
</g>
<g fill="#a08fcb">
<path transform="translate(799 691) scale(0.2495)" d="M575 295 C574 299 592 309 600 315 C608 321 620 322 625 330 C630 338 628 345 628 360 C628 375 625 397 625 420 C625 443 631 475 630 500 C629 525 627 548 620 570 C613 592 603 612 590 630 C577 648 560 665 540 680 C520 695 497 708 470 720 C443 732 408 741 380 750 C352 759 322 768 300 775 C278 782 264 788 250 795 C236 802 227 816 215 820 C203 824 192 825 180 822 C168 819 150 809 140 800 C130 791 124 779 120 770 C116 761 118 747 115 748 C112 749 102 765 100 775 C98 785 97 800 100 810 C103 820 110 828 120 835 C130 842 148 844 160 850 C172 856 186 862 190 870 C194 878 185 885 185 900 C185 915 187 938 190 960 C193 982 203 1011 205 1030 C207 1049 208 1060 200 1075 C192 1090 173 1105 160 1120 C147 1135 129 1149 120 1165 C111 1181 107 1196 105 1215 C103 1234 110 1261 110 1280 C110 1299 110 1315 105 1330 C100 1345 87 1358 80 1370 C73 1382 63 1398 62 1405 C61 1412 67 1419 75 1415 C83 1411 99 1394 110 1380 C121 1366 133 1348 140 1330 C147 1312 147 1290 150 1270 C153 1250 152 1228 160 1210 C168 1192 182 1177 200 1160 C218 1143 248 1125 270 1110 C292 1095 318 1083 335 1070 C352 1057 359 1046 370 1030 C381 1014 385 989 400 975 C415 961 433 955 460 945 C487 935 525 923 560 915 C595 907 635 904 670 895 C705 886 738 874 770 860 C802 846 835 825 860 810 C885 795 908 773 920 770 C932 767 933 780 935 790 C937 800 930 817 930 830 C930 843 938 859 935 870 C932 881 922 889 915 895 C908 901 895 900 890 905 C885 910 883 920 885 925 C887 930 892 934 900 932 C908 930 924 919 935 910 C946 901 958 893 965 880 C972 867 973 848 975 830 C977 812 972 786 975 770 C978 754 991 746 995 735 C999 724 1002 713 1000 705 C998 697 993 689 985 685 C977 681 964 679 950 680 C936 681 922 684 900 690 C878 696 837 723 820 718 C803 713 808 681 800 660 C792 639 782 615 775 590 C768 565 759 533 755 510 C751 487 749 465 750 450 C751 435 753 428 760 420 C767 412 778 411 790 405 C802 399 819 392 830 385 C841 378 849 368 855 360 C861 352 871 340 865 335 C859 330 839 332 820 330 C801 328 773 322 750 320 C727 318 697 318 680 315 C663 312 658 308 650 300 C642 292 639 279 635 270 C631 261 622 257 625 245 C628 233 644 212 655 200 C666 188 678 180 690 170 C702 160 718 150 730 140 C742 130 753 118 760 110 C767 102 773 95 772 92 C771 89 764 86 755 92 C746 98 726 127 720 125 C714 123 723 94 722 80 C721 66 715 44 712 40 C709 36 704 45 702 55 C700 65 700 85 700 100 C700 115 705 133 700 145 C695 157 676 174 670 170 C664 166 668 135 665 120 C662 105 658 86 655 82 C652 78 647 85 645 95 C643 105 644 125 645 140 C646 155 653 172 648 185 C643 198 623 212 615 215 C607 218 605 208 600 200 C595 192 589 179 585 170 C581 161 578 149 575 148 C572 147 569 155 570 165 C571 175 575 196 580 210 C585 224 594 238 600 250 C606 262 617 273 618 280 C619 287 612 288 605 290 C598 292 576 291 575 295Z"/>
<path transform="translate(1054 869) scale(0.2495)" d="M575 295 C574 299 592 309 600 315 C608 321 620 322 625 330 C630 338 628 345 628 360 C628 375 625 397 625 420 C625 443 631 475 630 500 C629 525 627 548 620 570 C613 592 603 612 590 630 C577 648 560 665 540 680 C520 695 497 708 470 720 C443 732 408 741 380 750 C352 759 322 768 300 775 C278 782 264 788 250 795 C236 802 227 816 215 820 C203 824 192 825 180 822 C168 819 150 809 140 800 C130 791 124 779 120 770 C116 761 118 747 115 748 C112 749 102 765 100 775 C98 785 97 800 100 810 C103 820 110 828 120 835 C130 842 148 844 160 850 C172 856 186 862 190 870 C194 878 185 885 185 900 C185 915 187 938 190 960 C193 982 203 1011 205 1030 C207 1049 208 1060 200 1075 C192 1090 173 1105 160 1120 C147 1135 129 1149 120 1165 C111 1181 107 1196 105 1215 C103 1234 110 1261 110 1280 C110 1299 110 1315 105 1330 C100 1345 87 1358 80 1370 C73 1382 63 1398 62 1405 C61 1412 67 1419 75 1415 C83 1411 99 1394 110 1380 C121 1366 133 1348 140 1330 C147 1312 147 1290 150 1270 C153 1250 152 1228 160 1210 C168 1192 182 1177 200 1160 C218 1143 248 1125 270 1110 C292 1095 318 1083 335 1070 C352 1057 359 1046 370 1030 C381 1014 385 989 400 975 C415 961 433 955 460 945 C487 935 525 923 560 915 C595 907 635 904 670 895 C705 886 738 874 770 860 C802 846 835 825 860 810 C885 795 908 773 920 770 C932 767 933 780 935 790 C937 800 930 817 930 830 C930 843 938 859 935 870 C932 881 922 889 915 895 C908 901 895 900 890 905 C885 910 883 920 885 925 C887 930 892 934 900 932 C908 930 924 919 935 910 C946 901 958 893 965 880 C972 867 973 848 975 830 C977 812 972 786 975 770 C978 754 991 746 995 735 C999 724 1002 713 1000 705 C998 697 993 689 985 685 C977 681 964 679 950 680 C936 681 922 684 900 690 C878 696 837 723 820 718 C803 713 808 681 800 660 C792 639 782 615 775 590 C768 565 759 533 755 510 C751 487 749 465 750 450 C751 435 753 428 760 420 C767 412 778 411 790 405 C802 399 819 392 830 385 C841 378 849 368 855 360 C861 352 871 340 865 335 C859 330 839 332 820 330 C801 328 773 322 750 320 C727 318 697 318 680 315 C663 312 658 308 650 300 C642 292 639 279 635 270 C631 261 622 257 625 245 C628 233 644 212 655 200 C666 188 678 180 690 170 C702 160 718 150 730 140 C742 130 753 118 760 110 C767 102 773 95 772 92 C771 89 764 86 755 92 C746 98 726 127 720 125 C714 123 723 94 722 80 C721 66 715 44 712 40 C709 36 704 45 702 55 C700 65 700 85 700 100 C700 115 705 133 700 145 C695 157 676 174 670 170 C664 166 668 135 665 120 C662 105 658 86 655 82 C652 78 647 85 645 95 C643 105 644 125 645 140 C646 155 653 172 648 185 C643 198 623 212 615 215 C607 218 605 208 600 200 C595 192 589 179 585 170 C581 161 578 149 575 148 C572 147 569 155 570 165 C571 175 575 196 580 210 C585 224 594 238 600 250 C606 262 617 273 618 280 C619 287 612 288 605 290 C598 292 576 291 575 295Z"/>
<path transform="translate(1290 1085) scale(0.2495)" d="M575 295 C574 299 592 309 600 315 C608 321 620 322 625 330 C630 338 628 345 628 360 C628 375 625 397 625 420 C625 443 631 475 630 500 C629 525 627 548 620 570 C613 592 603 612 590 630 C577 648 560 665 540 680 C520 695 497 708 470 720 C443 732 408 741 380 750 C352 759 322 768 300 775 C278 782 264 788 250 795 C236 802 227 816 215 820 C203 824 192 825 180 822 C168 819 150 809 140 800 C130 791 124 779 120 770 C116 761 118 747 115 748 C112 749 102 765 100 775 C98 785 97 800 100 810 C103 820 110 828 120 835 C130 842 148 844 160 850 C172 856 186 862 190 870 C194 878 185 885 185 900 C185 915 187 938 190 960 C193 982 203 1011 205 1030 C207 1049 208 1060 200 1075 C192 1090 173 1105 160 1120 C147 1135 129 1149 120 1165 C111 1181 107 1196 105 1215 C103 1234 110 1261 110 1280 C110 1299 110 1315 105 1330 C100 1345 87 1358 80 1370 C73 1382 63 1398 62 1405 C61 1412 67 1419 75 1415 C83 1411 99 1394 110 1380 C121 1366 133 1348 140 1330 C147 1312 147 1290 150 1270 C153 1250 152 1228 160 1210 C168 1192 182 1177 200 1160 C218 1143 248 1125 270 1110 C292 1095 318 1083 335 1070 C352 1057 359 1046 370 1030 C381 1014 385 989 400 975 C415 961 433 955 460 945 C487 935 525 923 560 915 C595 907 635 904 670 895 C705 886 738 874 770 860 C802 846 835 825 860 810 C885 795 908 773 920 770 C932 767 933 780 935 790 C937 800 930 817 930 830 C930 843 938 859 935 870 C932 881 922 889 915 895 C908 901 895 900 890 905 C885 910 883 920 885 925 C887 930 892 934 900 932 C908 930 924 919 935 910 C946 901 958 893 965 880 C972 867 973 848 975 830 C977 812 972 786 975 770 C978 754 991 746 995 735 C999 724 1002 713 1000 705 C998 697 993 689 985 685 C977 681 964 679 950 680 C936 681 922 684 900 690 C878 696 837 723 820 718 C803 713 808 681 800 660 C792 639 782 615 775 590 C768 565 759 533 755 510 C751 487 749 465 750 450 C751 435 753 428 760 420 C767 412 778 411 790 405 C802 399 819 392 830 385 C841 378 849 368 855 360 C861 352 871 340 865 335 C859 330 839 332 820 330 C801 328 773 322 750 320 C727 318 697 318 680 315 C663 312 658 308 650 300 C642 292 639 279 635 270 C631 261 622 257 625 245 C628 233 644 212 655 200 C666 188 678 180 690 170 C702 160 718 150 730 140 C742 130 753 118 760 110 C767 102 773 95 772 92 C771 89 764 86 755 92 C746 98 726 127 720 125 C714 123 723 94 722 80 C721 66 715 44 712 40 C709 36 704 45 702 55 C700 65 700 85 700 100 C700 115 705 133 700 145 C695 157 676 174 670 170 C664 166 668 135 665 120 C662 105 658 86 655 82 C652 78 647 85 645 95 C643 105 644 125 645 140 C646 155 653 172 648 185 C643 198 623 212 615 215 C607 218 605 208 600 200 C595 192 589 179 585 170 C581 161 578 149 575 148 C572 147 569 155 570 165 C571 175 575 196 580 210 C585 224 594 238 600 250 C606 262 617 273 618 280 C619 287 612 288 605 290 C598 292 576 291 575 295Z"/>
</g>
<path transform="translate(880 1275) scale(0.09317)" d="M180 250 C190 221 212 214 240 205 C268 196 312 202 350 195 C388 188 425 171 470 160 C515 149 565 135 620 130 C675 125 753 124 800 130 C847 136 873 156 900 165 C927 174 918 184 960 185 C1002 186 1085 169 1150 170 C1215 171 1275 184 1350 190 C1425 196 1538 193 1600 205 C1662 217 1678 232 1720 260 C1762 288 1805 332 1850 370 C1895 408 1948 457 1990 490 C2032 523 2057 547 2100 570 C2143 593 2207 613 2250 630 C2293 647 2330 655 2360 670 C2390 685 2417 700 2430 720 C2443 740 2444 768 2440 790 C2436 812 2417 845 2405 850 C2393 855 2377 833 2370 820 C2363 807 2377 784 2365 770 C2353 756 2336 745 2300 735 C2264 725 2195 724 2150 710 C2105 696 2072 673 2030 650 C1988 627 1940 598 1900 570 C1860 542 1807 475 1790 480 C1773 485 1787 563 1800 600 C1813 637 1845 670 1870 700 C1895 730 1927 757 1950 780 C1973 803 1993 817 2010 840 C2027 863 2040 893 2050 920 C2060 947 2072 975 2070 1000 C2068 1025 2053 1053 2040 1070 C2027 1087 2002 1099 1990 1100 C1978 1101 1965 1087 1965 1075 C1965 1063 1986 1049 1990 1030 C1994 1011 1997 983 1990 960 C1983 937 1973 912 1950 890 C1927 868 1892 852 1850 830 C1808 808 1738 783 1700 760 C1662 737 1640 715 1620 690 C1600 665 1595 615 1580 610 C1565 605 1543 640 1530 660 C1517 680 1500 698 1500 730 C1500 762 1522 820 1530 850 C1538 880 1553 890 1550 910 C1547 930 1532 948 1510 970 C1488 992 1452 1022 1420 1040 C1388 1058 1342 1078 1320 1080 C1298 1082 1283 1060 1285 1050 C1287 1040 1308 1033 1330 1020 C1352 1007 1398 987 1420 970 C1442 953 1460 942 1460 920 C1460 898 1440 873 1420 840 C1400 807 1358 760 1340 720 C1322 680 1314 638 1310 600 C1306 562 1333 499 1315 490 C1297 481 1244 531 1200 545 C1156 559 1100 568 1050 575 C1000 582 927 581 900 590 C873 599 887 587 890 630 C893 673 912 792 920 850 C928 908 938 947 935 980 C932 1013 918 1035 900 1050 C882 1065 850 1072 830 1070 C810 1068 782 1050 780 1040 C778 1030 805 1018 820 1010 C835 1002 862 1005 870 990 C878 975 877 952 870 920 C863 888 843 848 830 800 C817 752 805 668 790 630 C775 592 758 585 740 575 C722 565 700 556 680 570 C660 584 642 635 620 660 C598 685 583 692 550 720 C517 748 462 793 420 830 C378 867 337 913 300 940 C263 967 227 982 200 990 C173 998 148 997 140 990 C132 983 132 962 150 950 C168 938 220 937 250 920 C280 903 302 883 330 850 C358 817 392 762 420 720 C448 678 482 640 500 600 C518 560 538 510 530 480 C522 450 475 428 450 420 C425 412 405 430 380 430 C355 430 323 413 300 420 C277 427 257 467 240 470 C223 473 210 455 200 440 C190 425 183 412 180 380 C177 348 170 279 180 250Z" fill="#141215"/>
</svg>

<!-- status bar & subtitle -->
<div class="a" style="left:254px;top:1581px;width:355px;height:26px;background:#5c5c5c"></div>
<div class="t" style="left:160px;top:1583px;font-size:22px;color:#f0f0f0;-webkit-text-stroke:0.5px #f0f0f0">33.33%</div>
<div class="t" style="left:257px;top:1583px;font-size:22px;letter-spacing:0.25px;color:#e8e8e8;-webkit-text-stroke:0.4px #e8e8e8">2480 像素 x 3508 像素 (300 ppi)</div>
<svg style="left:0;top:0" width="700" height="1613"><path d="M592 1586 L597 1594 L592 1602" fill="none" stroke="#c8c8c8" stroke-width="2"/></svg>

<!-- right docks -->
<div class="a" style="left:2189px;top:147px;width:619px;height:29px;background:#535353"></div>
<div class="a" style="left:2189px;top:176px;width:71px;height:1431px;background:#636363"></div>
<div class="a" style="left:2260px;top:176px;width:6px;height:1431px;background:#4a4a4a"></div>
<div class="a" style="left:2266px;top:176px;width:542px;height:1431px;background:#636363"></div>

<!-- right dock details -->
<div class="a" style="left:2189px;top:252px;width:71px;height:2px;background:#575757"></div>
<div class="a" style="left:2266px;top:176px;width:542px;height:53px;background:#535353"></div>
<div class="a" style="left:2266px;top:176px;width:76px;height:53px;background:#636363"></div>
<div class="a" style="left:2419px;top:180px;width:1.5px;height:49px;background:#4c4c4c"></div>
<div class="a" style="left:2496px;top:180px;width:1.5px;height:49px;background:#4c4c4c"></div>
<div class="a" style="left:2574px;top:180px;width:1.5px;height:49px;background:#4c4c4c"></div>
<div class="t" style="left:2282px;top:190px;font-size:21px;color:#f6f6f6;-webkit-text-stroke:0.6px #f6f6f6;">颜色</div>
<div class="t" style="left:2359px;top:190px;font-size:21px;color:#d8d8d8;-webkit-text-stroke:0.3px #d8d8d8;">色板</div>
<div class="t" style="left:2436px;top:190px;font-size:21px;color:#d8d8d8;-webkit-text-stroke:0.3px #d8d8d8;">渐变</div>
<div class="t" style="left:2515px;top:190px;font-size:21px;color:#d8d8d8;-webkit-text-stroke:0.3px #d8d8d8;">图案</div>
<div class="a" style="left:2351px;top:242px;width:356px;height:203px;background:linear-gradient(to bottom,rgba(0,0,0,0),#000),linear-gradient(to right,#fff,#ff0033)"></div>
<div class="a" style="left:2740px;top:242px;width:37px;height:203px;background:linear-gradient(to bottom,#ff0033 0%,#ff00ff 17%,#2a00ff 33%,#00ffff 50%,#00ff22 67%,#ffff00 83%,#ff2200 100%)"></div>
<div class="a" style="left:2266px;top:479px;width:542px;height:7px;background:#4a4a4a"></div>
<div class="a" style="left:2266px;top:486px;width:542px;height:52px;background:#535353"></div>
<div class="a" style="left:2266px;top:486px;width:76px;height:52px;background:#636363"></div>
<div class="a" style="left:2419px;top:490px;width:1.5px;height:48px;background:#4c4c4c"></div>
<div class="a" style="left:2496px;top:490px;width:1.5px;height:48px;background:#4c4c4c"></div>
<div class="t" style="left:2282px;top:501px;font-size:21px;color:#f6f6f6;-webkit-text-stroke:0.6px #f6f6f6;">属性</div>
<div class="t" style="left:2359px;top:501px;font-size:21px;color:#d8d8d8;-webkit-text-stroke:0.3px #d8d8d8;">调整</div>
<div class="t" style="left:2436px;top:501px;font-size:21px;color:#d8d8d8;-webkit-text-stroke:0.3px #d8d8d8;">库</div>
<div class="a" style="left:2287px;top:553px;width:40px;height:39px;background:#404040;border-radius:3px"></div>
<div class="t" style="left:2339px;top:563px;font-size:21px;color:#f0f0f0;-webkit-text-stroke:0.4px #f0f0f0;">蒙版</div>
<div class="a" style="left:2266px;top:600px;width:540px;height:2px;background:#585858"></div>
<div class="a" style="left:2287px;top:621px;width:44px;height:58px;background:#8c8c8c;border:1.5px solid #555"></div>
<div class="t" style="left:2347px;top:639px;font-size:21px;color:#f0f0f0;-webkit-text-stroke:0.4px #f0f0f0;">形状路径</div>
<div class="a" style="left:2721px;top:630px;width:40px;height:39px;background:#464646;border-radius:3px"></div>
<div class="a" style="left:2266px;top:709px;width:520px;height:2px;background:#585858"></div>
<div class="a" style="left:2785px;top:611px;width:17px;height:269px;background:#727272;border-radius:9px"></div>
<div class="t" style="left:2289px;top:748px;font-size:21px;color:#e8e8e8;-webkit-text-stroke:0.4px #e8e8e8;">密度:</div>
<div class="a" style="left:2641px;top:744px;width:111px;height:30px;background:#575757;border:1px solid #525252"></div>
<div class="t" style="left:2648px;top:749px;font-size:21px;color:#f4f4f4;-webkit-text-stroke:0.3px #f4f4f4;">100%</div>
<div class="a" style="left:2298px;top:783px;width:448px;height:4px;background:#7c7c7c;border-radius:2px"></div>
<div class="t" style="left:2289px;top:857px;font-size:21px;color:#e8e8e8;-webkit-text-stroke:0.4px #e8e8e8;">羽化:</div>
<div class="a" style="left:2641px;top:852px;width:111px;height:30px;background:#575757;border:1px solid #525252"></div>
<div class="t" style="left:2648px;top:857px;font-size:21px;color:#f4f4f4;-webkit-text-stroke:0.3px #f4f4f4;">0.0 像素</div>
<div class="a" style="left:2298px;top:891px;width:448px;height:4px;background:#7c7c7c;border-radius:2px"></div>
<div class="t" style="left:2280px;top:961px;font-size:21px;color:#8a8a8a;-webkit-text-stroke:0.3px #8a8a8a;">调整:</div>
<div class="a" style="left:2266px;top:998px;width:542px;height:45px;background:#5e5e5e;border-top:1.5px solid #575757"></div>
<div class="a" style="left:2661px;top:998px;width:50px;height:45px;background:#4e4e4e"></div>
<div class="a" style="left:2266px;top:1043px;width:542px;height:9px;background:#4a4a4a"></div>
<div class="a" style="left:2266px;top:1052px;width:542px;height:51px;background:#535353"></div>
<div class="a" style="left:2343px;top:1052px;width:76px;height:51px;background:#636363"></div>
<div class="t" style="left:2282px;top:1066px;font-size:21px;color:#d8d8d8;-webkit-text-stroke:0.3px #d8d8d8;">通道</div>
<div class="t" style="left:2359px;top:1066px;font-size:21px;color:#f6f6f6;-webkit-text-stroke:0.6px #f6f6f6;">路径</div>
<div class="a" style="left:2266px;top:1103px;width:542px;height:10px;background:#5f5f5f"></div>
<div class="a" style="left:2266px;top:1113px;width:510px;height:68px;background:#7a7a7a"></div>
<div class="a" style="left:2776px;top:1113px;width:32px;height:451px;background:#5f5f5f"></div>
<div class="a" style="left:2272px;top:1118px;width:44px;height:59px;background:#8e8e8e;border:1.5px solid #555"></div>
<div class="t" style="left:2325px;top:1135px;font-size:21px;color:#f2f2f2;-webkit-text-stroke:0.5px #f2f2f2;">美洲豹 1形状路径</div>
<div class="a" style="left:2266px;top:1564px;width:542px;height:43px;background:#5e5e5e;border-top:1.5px solid #575757"></div>
<svg style="left:0;top:0" width="2880" height="1613">
<g fill="none" stroke="#e8e8e8" stroke-width="2.4"><path d="M2246 158 L2241 163 L2246 168 M2253 158 L2248 163 L2253 168"/><path d="M2781 158 L2786 163 L2781 168 M2788 158 L2793 163 L2788 168"/></g>
<g fill="#c8c8c8">
<rect x="2776" y="195" width="20" height="2"/><rect x="2776" y="199" width="20" height="2"/><rect x="2776" y="203" width="20" height="2"/><rect x="2776" y="207" width="20" height="2"/>
<rect x="2776" y="506" width="20" height="2"/><rect x="2776" y="510" width="20" height="2"/><rect x="2776" y="514" width="20" height="2"/><rect x="2776" y="518" width="20" height="2"/>
<rect x="2778" y="1071" width="20" height="2"/><rect x="2778" y="1075" width="20" height="2"/><rect x="2778" y="1079" width="20" height="2"/><rect x="2778" y="1083" width="20" height="2"/>
</g>
<g stroke="#5a5a5a" stroke-width="1"><path d="M2205 186 H2245 M2205 189 H2245"/></g>
<g fill="#f0f0f0"><rect x="2209" y="229" width="11" height="11"/></g>
<g fill="none" stroke="#f0f0f0" stroke-width="2"><rect x="2210" y="203" width="9" height="9"/><rect x="2210" y="216" width="9" height="9"/><path d="M2229 211 C2238 214 2240 226 2231 235" stroke-width="3"/></g>
<path d="M2226 204 L2234 207 L2228 214 Z" fill="#f0f0f0"/>
<circle cx="2214.5" cy="207.5" r="1.5" fill="#f0f0f0"/><circle cx="2214.5" cy="220.5" r="1.5" fill="#f0f0f0"/>
<!-- fg bg swatch -->
<rect x="2303" y="266" width="36" height="38" fill="#fff" stroke="#555" stroke-width="1"/>
<rect x="2281" y="246" width="40" height="41" fill="#7d7d7d"/>
<rect x="2284" y="249" width="34" height="35" fill="#fafafa"/>
<rect x="2287" y="252" width="28" height="29" fill="#141416"/>
<path d="M2352 441 A10 10 0 0 1 2364 447" fill="none" stroke="#e0e0e0" stroke-width="2"/>
<path d="M2723 436 L2733 444 L2723 452 Z" fill="#f4f4f4" stroke="#555" stroke-width="1"/>
<!-- mask icon -->
<rect x="2293" y="562" width="28" height="21" rx="3" fill="#f4f4f4"/><circle cx="2307" cy="572.5" r="6.5" fill="#333"/>
<rect x="2297" y="667" width="8" height="3" fill="#444"/>
<!-- shape path icons -->
<g fill="#f0f0f0"><path d="M2686 637 H2708 V645 C2704 643 2700 645 2699 650 H2686 Z"/><circle cx="2696" cy="645" r="6" fill="#5f5f5f"/><rect x="2700" y="645" width="12" height="12" fill="#f0f0f0"/></g>
<path d="M2706 647 V655 M2702 651 H2710" stroke="#555" stroke-width="2"/>
<rect x="2732" y="641" width="18" height="17" fill="none" stroke="#f0f0f0" stroke-width="3"/>
<g fill="#f0f0f0"><circle cx="2732" cy="641" r="3"/><circle cx="2750" cy="641" r="3"/><circle cx="2732" cy="658" r="3"/><circle cx="2750" cy="658" r="3"/></g>
<!-- slider thumbs -->
<path d="M2746 791 L2756 803 C2756 808 2736 808 2736 803 Z" fill="#f8f8f8" stroke="#333" stroke-width="1.5"/>
<path d="M2293 899 L2303 911 C2303 916 2283 916 2283 911 Z" fill="#f8f8f8" stroke="#333" stroke-width="1.5"/>
<!-- properties bottom icons -->
<g fill="none" stroke="#e0e0e0" stroke-width="2.2" stroke-dasharray="4 3"><rect x="2565" y="1012" width="19" height="19"/></g>
<g fill="none" stroke="#8c8c8c" stroke-width="2.2"><path d="M2619 1021 L2629 1011 L2640 1021 L2629 1031 Z"/><path d="M2629 1012 V1024 M2625 1020 L2629 1024 L2633 1020"/></g>
<path d="M2673 1021 C2680 1011 2693 1011 2699 1021 C2693 1031 2680 1031 2673 1021 Z" fill="#f2f2f2"/><circle cx="2686" cy="1021" r="5" fill="#555"/>
<g fill="none" stroke="#8c8c8c" stroke-width="2.2"><path d="M2731 1013 H2750 M2737 1013 V1009 H2744 V1013 M2733 1016 V1032 H2748 V1016 M2738 1018 V1029 M2743 1018 V1029"/></g>
<!-- paths bottom icons -->
<circle cx="2428" cy="1587" r="9" fill="#b4b4b4"/>
<circle cx="2479" cy="1587" r="8.5" fill="none" stroke="#b4b4b4" stroke-width="2.2"/>
<circle cx="2531" cy="1587" r="9" fill="none" stroke="#9a9a9a" stroke-width="2" stroke-dasharray="2.5 2.5"/>
<g fill="none" stroke="#b4b4b4" stroke-width="2.2"><circle cx="2582" cy="1587" r="8"/></g>
<g fill="#b4b4b4"><rect x="2579" y="1575" width="6" height="6"/><rect x="2579" y="1593" width="6" height="6"/><rect x="2570" y="1584" width="6" height="6"/><rect x="2588" y="1584" width="6" height="6"/></g>
<rect x="2621" y="1576" width="26" height="21" fill="#f2f2f2"/><circle cx="2634" cy="1586.5" r="6.5" fill="#5e5e5e"/>
<rect x="2679" y="1576" width="22" height="22" fill="none" stroke="#f0f0f0" stroke-width="2.2"/><path d="M2690 1581 V1593 M2684 1587 H2696" stroke="#f0f0f0" stroke-width="2.4"/>
<g fill="none" stroke="#9a9a9a" stroke-width="2.2"><path d="M2733 1578 H2753 M2740 1578 V1574 H2746 V1578 M2735 1581 V1599 H2751 V1581 M2740 1583 V1596 M2746 1583 V1596"/></g>
<path d="M2850 790 L2838 803 L2850 816" fill="none" stroke="#777" stroke-width="2.5"/>
</svg>

<!-- layers floating panel -->
<div class="a" style="left:1637px;top:266px;width:440px;height:1227px;background:#636363;border-radius:6px 6px 0 0"></div>
<!-- layers panel detail -->
<div class="a" style="left:1637px;top:266px;width:440px;height:80px;background:#535353;border-radius:6px 6px 0 0"></div>
<div class="a" style="left:1637px;top:292px;width:77px;height:54px;background:#636363"></div>
<div class="t" style="left:1655px;top:307px;font-size:21px;color:#f4f4f4;-webkit-text-stroke:0.5px #f4f4f4">图层</div>
<div class="a" style="left:1646px;top:364px;width:142px;height:35px;background:#575757;border:1px solid #505050;border-radius:5px"></div>
<div class="t" style="left:1686px;top:371px;font-size:21px;color:#f0f0f0;-webkit-text-stroke:0.4px #f0f0f0">类型</div>
<div class="a" style="left:1637px;top:406px;width:440px;height:2px;background:#585858"></div>
<div class="a" style="left:1646px;top:419px;width:214px;height:34px;background:#575757;border:1px solid #505050;border-radius:5px"></div>
<div class="t" style="left:1660px;top:425px;font-size:21px;color:#f0f0f0;-webkit-text-stroke:0.4px #f0f0f0">正常</div>
<div class="t" style="left:1868px;top:425px;font-size:21px;color:#e4e4e4;-webkit-text-stroke:0.3px #e4e4e4">不透明度:</div>
<div class="a" style="left:1965px;top:419px;width:101px;height:34px;background:#575757;border:1px solid #505050;border-radius:5px"></div>
<div class="a" style="left:2040px;top:420px;width:2px;height:32px;background:#636363"></div>
<div class="t" style="left:1971px;top:426px;font-size:21px;color:#f4f4f4;-webkit-text-stroke:0.3px #f4f4f4">100%</div>
<div class="a" style="left:1637px;top:461px;width:440px;height:2px;background:#585858"></div>
<div class="t" style="left:1648px;top:480px;font-size:21px;color:#e4e4e4;-webkit-text-stroke:0.3px #e4e4e4">锁定:</div>
<div class="t" style="left:1911px;top:480px;font-size:21px;color:#e4e4e4;-webkit-text-stroke:0.3px #e4e4e4">填充:</div>
<div class="a" style="left:1965px;top:474px;width:101px;height:34px;background:#575757;border:1px solid #505050;border-radius:5px"></div>
<div class="a" style="left:2040px;top:475px;width:2px;height:32px;background:#636363"></div>
<div class="t" style="left:1971px;top:481px;font-size:21px;color:#f4f4f4;-webkit-text-stroke:0.3px #f4f4f4">100%</div>
<div class="a" style="left:1637px;top:519px;width:440px;height:3px;background:#585858"></div>
<div class="a" style="left:2049px;top:522px;width:28px;height:909px;background:#5f5f5f"></div>

<div class="a" style="left:1695px;top:522px;width:354px;height:78px;background:#7a7a7a"></div>
<div class="a" style="left:1637px;top:599px;width:412px;height:1.5px;background:#5a5a5a"></div>
<div class="a" style="left:1694px;top:522px;width:1.5px;height:78px;background:#5c5c5c"></div>
<div class="t" style="left:1764px;top:550px;font-size:21px;color:#f2f2f2;-webkit-text-stroke:0.4px #f2f2f2">美洲豹 1</div>
<div class="a" style="left:1695px;top:600px;width:354px;height:78px;background:#636363"></div>
<div class="a" style="left:1637px;top:677px;width:412px;height:1.5px;background:#5a5a5a"></div>
<div class="a" style="left:1694px;top:600px;width:1.5px;height:78px;background:#5c5c5c"></div>
<div class="t" style="left:1764px;top:628px;font-size:21px;color:#f2f2f2;-webkit-text-stroke:0.4px #f2f2f2">鹿 1</div>
<div class="a" style="left:1695px;top:678px;width:354px;height:78px;background:#636363"></div>
<div class="a" style="left:1637px;top:755px;width:412px;height:1.5px;background:#5a5a5a"></div>
<div class="a" style="left:1694px;top:678px;width:1.5px;height:78px;background:#5c5c5c"></div>
<div class="t" style="left:1764px;top:706px;font-size:21px;color:#f2f2f2;-webkit-text-stroke:0.4px #f2f2f2">鹿 1</div>
<div class="a" style="left:1695px;top:756px;width:354px;height:78px;background:#636363"></div>
<div class="a" style="left:1637px;top:833px;width:412px;height:1.5px;background:#5a5a5a"></div>
<div class="a" style="left:1694px;top:756px;width:1.5px;height:78px;background:#5c5c5c"></div>
<div class="t" style="left:1764px;top:784px;font-size:21px;color:#f2f2f2;-webkit-text-stroke:0.4px #f2f2f2">鹿 1</div>
<div class="a" style="left:1695px;top:834px;width:354px;height:78px;background:#636363"></div>
<div class="a" style="left:1637px;top:911px;width:412px;height:1.5px;background:#5a5a5a"></div>
<div class="a" style="left:1694px;top:834px;width:1.5px;height:78px;background:#5c5c5c"></div>
<div class="t" style="left:1764px;top:862px;font-size:21px;color:#f2f2f2;-webkit-text-stroke:0.4px #f2f2f2">牡鹿 1</div>
<div class="a" style="left:1695px;top:912px;width:354px;height:78px;background:#636363"></div>
<div class="a" style="left:1637px;top:989px;width:412px;height:1.5px;background:#5a5a5a"></div>
<div class="a" style="left:1694px;top:912px;width:1.5px;height:78px;background:#5c5c5c"></div>
<div class="t" style="left:1764px;top:940px;font-size:21px;color:#f2f2f2;-webkit-text-stroke:0.4px #f2f2f2">背景</div>
<svg style="left:0;top:0" width="2880" height="1613">
<defs><pattern id="chk" width="8" height="8" patternUnits="userSpaceOnUse"><rect width="8" height="8" fill="#fff"/><rect width="4" height="4" fill="#e8e8e8"/><rect x="4" y="4" width="4" height="4" fill="#e8e8e8"/></pattern></defs>
<g stroke="#e8e8e8" stroke-width="2.4" fill="none"><path d="M1648 274 L1658 284 M1658 274 L1648 284"/><path d="M2061 273 L2056 279 L2061 285 M2068 273 L2063 279 L2068 285"/></g>
<g fill="#c8c8c8"><rect x="2048" y="311" width="20" height="2"/><rect x="2048" y="315" width="20" height="2"/><rect x="2048" y="319" width="20" height="2"/><rect x="2048" y="323" width="20" height="2"/></g>
<g fill="none" stroke="#f0f0f0" stroke-width="2.4">
<circle cx="1669" cy="379" r="6.5"/><path d="M1674 384 L1680 390" stroke-linecap="round"/>
<path d="M1770 378 L1776 384 L1782 378" stroke-width="2"/><path d="M1842 434 L1848 440 L1854 434" stroke-width="2"/>
<path d="M2048 433 L2054 439 L2060 433" stroke-width="2"/><path d="M2048 488 L2054 494 L2060 488" stroke-width="2"/>
<rect x="1819" y="370" width="22" height="18" stroke-width="2.2"/>
<circle cx="1875" cy="379" r="9.5" stroke-width="2.2"/>
<rect x="1958" y="371" width="16" height="16" stroke-width="2.2"/>
<path d="M2011 370 H2018 L2024 376 V389 H2011 Z" stroke-width="2.2"/>
<rect x="2054" y="370" width="15" height="28" rx="7.5" stroke="#585858" stroke-width="2"/>
<path d="M1748 492 L1768 472" stroke="#9a9a9a" stroke-width="3" stroke-linecap="round"/>
<path d="M1791 490 H1815 M1803 478 V502"/>
<path d="M1836 482 H1856 V500 M1840 478 V496 H1860" stroke-width="2"/>
<path d="M1883 488 V483 C1883 474 1893 474 1893 483 V488"/>
</g>
<g fill="#f0f0f0">
<path d="M1822 385 L1827 377 L1831 382 L1834 379 L1838 385 Z"/>
<path d="M1875 369.5 A9.5 9.5 0 0 0 1875 388.5 Z"/>
<path d="M1907 370 H1933 V377 H1931 C1930 374 1929 373 1926 373 H1922 V387 C1922 388 1923 389 1925 389 V390 H1915 V389 C1917 389 1918 388 1918 387 V373 H1914 C1911 373 1910 374 1909 377 H1907 Z"/>
<circle cx="1958" cy="371" r="2.5"/><circle cx="1974" cy="371" r="2.5"/><circle cx="1958" cy="387" r="2.5"/><circle cx="1974" cy="387" r="2.5"/>
<rect x="2007" y="382" width="10" height="9"/>
<circle cx="2062" cy="378" r="7"/>
<path d="M1803 476 L1808 481 H1798 Z M1803 504 L1808 499 H1798 Z M1789 490 L1794 485 V495 Z M1817 490 L1812 485 V495 Z"/>
<rect x="1879" y="486" width="18" height="15" rx="2"/>
<path d="M1744 497 C1742 500 1741 503 1742 505 C1745 504 1748 502 1749 499 Z" fill="#9a9a9a"/>
</g>
<g fill="#8a8a8a"><rect x="1711" y="480" width="18" height="18" fill="#777"/><rect x="1711" y="480" width="6" height="6" fill="#9a9a9a"/><rect x="1723" y="480" width="6" height="6" fill="#9a9a9a"/><rect x="1717" y="486" width="6" height="6" fill="#9a9a9a"/><rect x="1711" y="492" width="6" height="6" fill="#9a9a9a"/><rect x="1723" y="492" width="6" height="6" fill="#9a9a9a"/></g>
<circle cx="1888" cy="494" r="2" fill="#555"/>

<path d="M1655 561 C1660 553 1674 553 1679 561 C1674 569 1660 569 1655 561 Z" fill="#f0f0f0"/><circle cx="1667" cy="561" r="4.5" fill="#555"/><circle cx="1665.5" cy="559.5" r="1.3" fill="#ddd"/>
<rect x="1703" y="530" width="45" height="62" fill="url(#chk)" stroke="#222" stroke-width="1.5"/>
<rect x="1722" y="566" width="26" height="26" fill="#3a3a3a"/><rect x="1728" y="572" width="15" height="15" fill="none" stroke="#e0e0e0" stroke-width="2.5"/>
<circle cx="1728" cy="572" r="2.5" fill="#e0e0e0"/>
<circle cx="1743" cy="572" r="2.5" fill="#e0e0e0"/>
<circle cx="1728" cy="587" r="2.5" fill="#e0e0e0"/>
<circle cx="1743" cy="587" r="2.5" fill="#e0e0e0"/>
<path d="M1700 542 V527 H1715 M1736 527 H1751 V542 M1700 577 V595 H1715 M1736 595 H1751 V577" fill="none" stroke="#fff" stroke-width="2.2"/>
<path d="M1655 639 C1660 631 1674 631 1679 639 C1674 647 1660 647 1655 639 Z" fill="#f0f0f0"/><circle cx="1667" cy="639" r="4.5" fill="#555"/><circle cx="1665.5" cy="637.5" r="1.3" fill="#ddd"/>
<rect x="1703" y="608" width="45" height="62" fill="url(#chk)" stroke="#222" stroke-width="1.5"/>
<rect x="1722" y="644" width="26" height="26" fill="#3a3a3a"/><rect x="1728" y="650" width="15" height="15" fill="none" stroke="#e0e0e0" stroke-width="2.5"/>
<circle cx="1728" cy="650" r="2.5" fill="#e0e0e0"/>
<circle cx="1743" cy="650" r="2.5" fill="#e0e0e0"/>
<circle cx="1728" cy="665" r="2.5" fill="#e0e0e0"/>
<circle cx="1743" cy="665" r="2.5" fill="#e0e0e0"/>
<path d="M1706 630 L1712 624 L1716 628" stroke="#a08fcb" stroke-width="2" fill="none"/>
<path d="M1655 717 C1660 709 1674 709 1679 717 C1674 725 1660 725 1655 717 Z" fill="#f0f0f0"/><circle cx="1667" cy="717" r="4.5" fill="#555"/><circle cx="1665.5" cy="715.5" r="1.3" fill="#ddd"/>
<rect x="1703" y="686" width="45" height="62" fill="url(#chk)" stroke="#222" stroke-width="1.5"/>
<rect x="1722" y="722" width="26" height="26" fill="#3a3a3a"/><rect x="1728" y="728" width="15" height="15" fill="none" stroke="#e0e0e0" stroke-width="2.5"/>
<circle cx="1728" cy="728" r="2.5" fill="#e0e0e0"/>
<circle cx="1743" cy="728" r="2.5" fill="#e0e0e0"/>
<circle cx="1728" cy="743" r="2.5" fill="#e0e0e0"/>
<circle cx="1743" cy="743" r="2.5" fill="#e0e0e0"/>
<path d="M1655 795 C1660 787 1674 787 1679 795 C1674 803 1660 803 1655 795 Z" fill="#f0f0f0"/><circle cx="1667" cy="795" r="4.5" fill="#555"/><circle cx="1665.5" cy="793.5" r="1.3" fill="#ddd"/>
<rect x="1703" y="764" width="45" height="62" fill="url(#chk)" stroke="#222" stroke-width="1.5"/>
<rect x="1722" y="800" width="26" height="26" fill="#3a3a3a"/><rect x="1728" y="806" width="15" height="15" fill="none" stroke="#e0e0e0" stroke-width="2.5"/>
<circle cx="1728" cy="806" r="2.5" fill="#e0e0e0"/>
<circle cx="1743" cy="806" r="2.5" fill="#e0e0e0"/>
<circle cx="1728" cy="821" r="2.5" fill="#e0e0e0"/>
<circle cx="1743" cy="821" r="2.5" fill="#e0e0e0"/>
<path d="M1655 873 C1660 865 1674 865 1679 873 C1674 881 1660 881 1655 873 Z" fill="#f0f0f0"/><circle cx="1667" cy="873" r="4.5" fill="#555"/><circle cx="1665.5" cy="871.5" r="1.3" fill="#ddd"/>
<rect x="1703" y="842" width="45" height="62" fill="url(#chk)" stroke="#222" stroke-width="1.5"/>
<rect x="1722" y="878" width="26" height="26" fill="#3a3a3a"/><rect x="1728" y="884" width="15" height="15" fill="none" stroke="#e0e0e0" stroke-width="2.5"/>
<circle cx="1728" cy="884" r="2.5" fill="#e0e0e0"/>
<circle cx="1743" cy="884" r="2.5" fill="#e0e0e0"/>
<circle cx="1728" cy="899" r="2.5" fill="#e0e0e0"/>
<circle cx="1743" cy="899" r="2.5" fill="#e0e0e0"/>
<path d="M1714 862 L1722 856 L1716 868 L1724 864" stroke="#f09070" stroke-width="2.4" fill="none"/>
<path d="M1655 951 C1660 943 1674 943 1679 951 C1674 959 1660 959 1655 951 Z" fill="#f0f0f0"/><circle cx="1667" cy="951" r="4.5" fill="#555"/><circle cx="1665.5" cy="949.5" r="1.3" fill="#ddd"/>
<rect x="1703" y="920" width="45" height="62" fill="#fff" stroke="#222" stroke-width="1.5"/>
<rect x="1997" y="947" width="18" height="14" rx="2" fill="none" stroke="#e0e0e0" stroke-width="2"/><path d="M2001 947 V943 C2001 936 2011 936 2011 943 V947" fill="none" stroke="#e0e0e0" stroke-width="2"/><circle cx="2006" cy="954" r="1.8" fill="#e0e0e0"/>
</svg>

<div class="a" style="left:1637px;top:1431px;width:440px;height:47px;background:#5e5e5e;border-top:1px solid #575757"></div>
<div class="a" style="left:1637px;top:1478px;width:440px;height:15px;background:#585858;border-top:1px solid #505050"></div>
<svg style="left:0;top:0" width="2880" height="1613">
<g fill="none" stroke="#9a9a9a" stroke-width="2.2"><rect x="1692" y="1450" width="12" height="10" rx="5"/><rect x="1702" y="1450" width="12" height="10" rx="5"/><path d="M1698 1455 H1708"/></g>
<text x="1744" y="1464" font-family="Liberation Serif" font-style="italic" font-size="24" fill="#e8e8e8">fx</text>
<path d="M1763 1466 L1767 1466 L1765 1469 Z" fill="#e8e8e8"/>
<rect x="1794" y="1445" width="26" height="19" fill="#f0f0f0"/><circle cx="1807" cy="1454.5" r="6" fill="#5e5e5e"/>
<circle cx="1857" cy="1455" r="10" fill="none" stroke="#f0f0f0" stroke-width="2.2"/><path d="M1857 1445 A10 10 0 0 0 1857 1465 Z" fill="#f0f0f0" transform="rotate(45 1857 1455)"/>
<path d="M1869 1466 L1873 1466 L1871 1469 Z" fill="#e8e8e8"/>
<path d="M1897 1444 H1907 L1910 1447 H1922 V1465 H1897 Z" fill="#f0f0f0"/>
<rect x="1949" y="1444" width="22" height="22" fill="none" stroke="#f0f0f0" stroke-width="2.2"/><path d="M1960 1449 V1461 M1954 1455 H1966" stroke="#f0f0f0" stroke-width="2.4"/>
<g fill="none" stroke="#f0f0f0" stroke-width="2.2"><path d="M2002 1446 H2022 M2009 1446 V1442 H2015 V1446 M2004 1449 V1467 H2020 V1449 M2009 1451 V1464 M2015 1451 V1464"/></g>
</svg>



<!-- tooltip -->
<div class="a" style="left:376px;top:156px;width:378px;height:38px;background:#fbfbe4;border:1px solid #d8d8c0;box-shadow:1px 2px 2px rgba(0,0,0,.35)"></div>
<div class="t" style="left:393px;top:164px;font-size:21px;color:#3a3a3a">通过单击可见像素自动选择组或图层</div>
<!-- cursor -->
<svg style="left:370px;top:118px" width="30" height="40" viewBox="0 0 30 40"><path d="M4 3 L4 27 L10 21 L14 31 L18 29 L14 20 L22 20 Z" fill="#111" stroke="#fff" stroke-width="2"/></svg>
<!-- label box -->
<div class="a" style="left:1370px;top:146px;width:224px;height:90px;background:#f07a2a"></div>
<div class="a" style="left:1365px;top:140px;width:224px;height:89px;border:6px solid #c6d800;background:#fff"></div>
<div class="t" style="left:1380px;top:152px;font-size:62px;font-weight:bold;color:#c6d800;letter-spacing:1px;-webkit-text-stroke:1.2px #c6d800">选项栏</div>
<!-- subtitle -->
<div class="t" style="left:1144px;top:1473px;font-size:56px;color:#f8f8f8;transform:scaleX(0.64);transform-origin:0 0;-webkit-text-stroke:1.6px #f8f8f8">有</div>
<div class="t" style="left:1210px;top:1473px;font-size:56px;color:#f8f8f8;transform:scaleX(0.64);transform-origin:0 0;-webkit-text-stroke:1.6px #f8f8f8">个</div>
<div class="t" style="left:1278px;top:1473px;font-size:56px;color:#f8f8f8;transform:scaleX(0.64);transform-origin:0 0;-webkit-text-stroke:1.6px #f8f8f8">自</div>
<div class="t" style="left:1342px;top:1473px;font-size:56px;color:#f8f8f8;transform:scaleX(0.64);transform-origin:0 0;-webkit-text-stroke:1.6px #f8f8f8">动</div>
<div class="t" style="left:1409px;top:1473px;font-size:56px;color:#f8f8f8;transform:scaleX(0.64);transform-origin:0 0;-webkit-text-stroke:1.6px #f8f8f8">选</div>
<div class="t" style="left:1474px;top:1473px;font-size:56px;color:#f8f8f8;transform:scaleX(0.64);transform-origin:0 0;-webkit-text-stroke:1.6px #f8f8f8">择</div>
<div class="t" style="left:1542px;top:1473px;font-size:56px;color:#f8f8f8;transform:scaleX(0.64);transform-origin:0 0;-webkit-text-stroke:1.6px #f8f8f8">的</div>
<div class="t" style="left:1608px;top:1473px;font-size:56px;color:#f8f8f8;transform:scaleX(0.64);transform-origin:0 0;-webkit-text-stroke:1.6px #f8f8f8">选</div>
<div class="t" style="left:1674px;top:1473px;font-size:56px;color:#f8f8f8;transform:scaleX(0.64);transform-origin:0 0;-webkit-text-stroke:1.6px #f8f8f8">项</div>
</body></html>
